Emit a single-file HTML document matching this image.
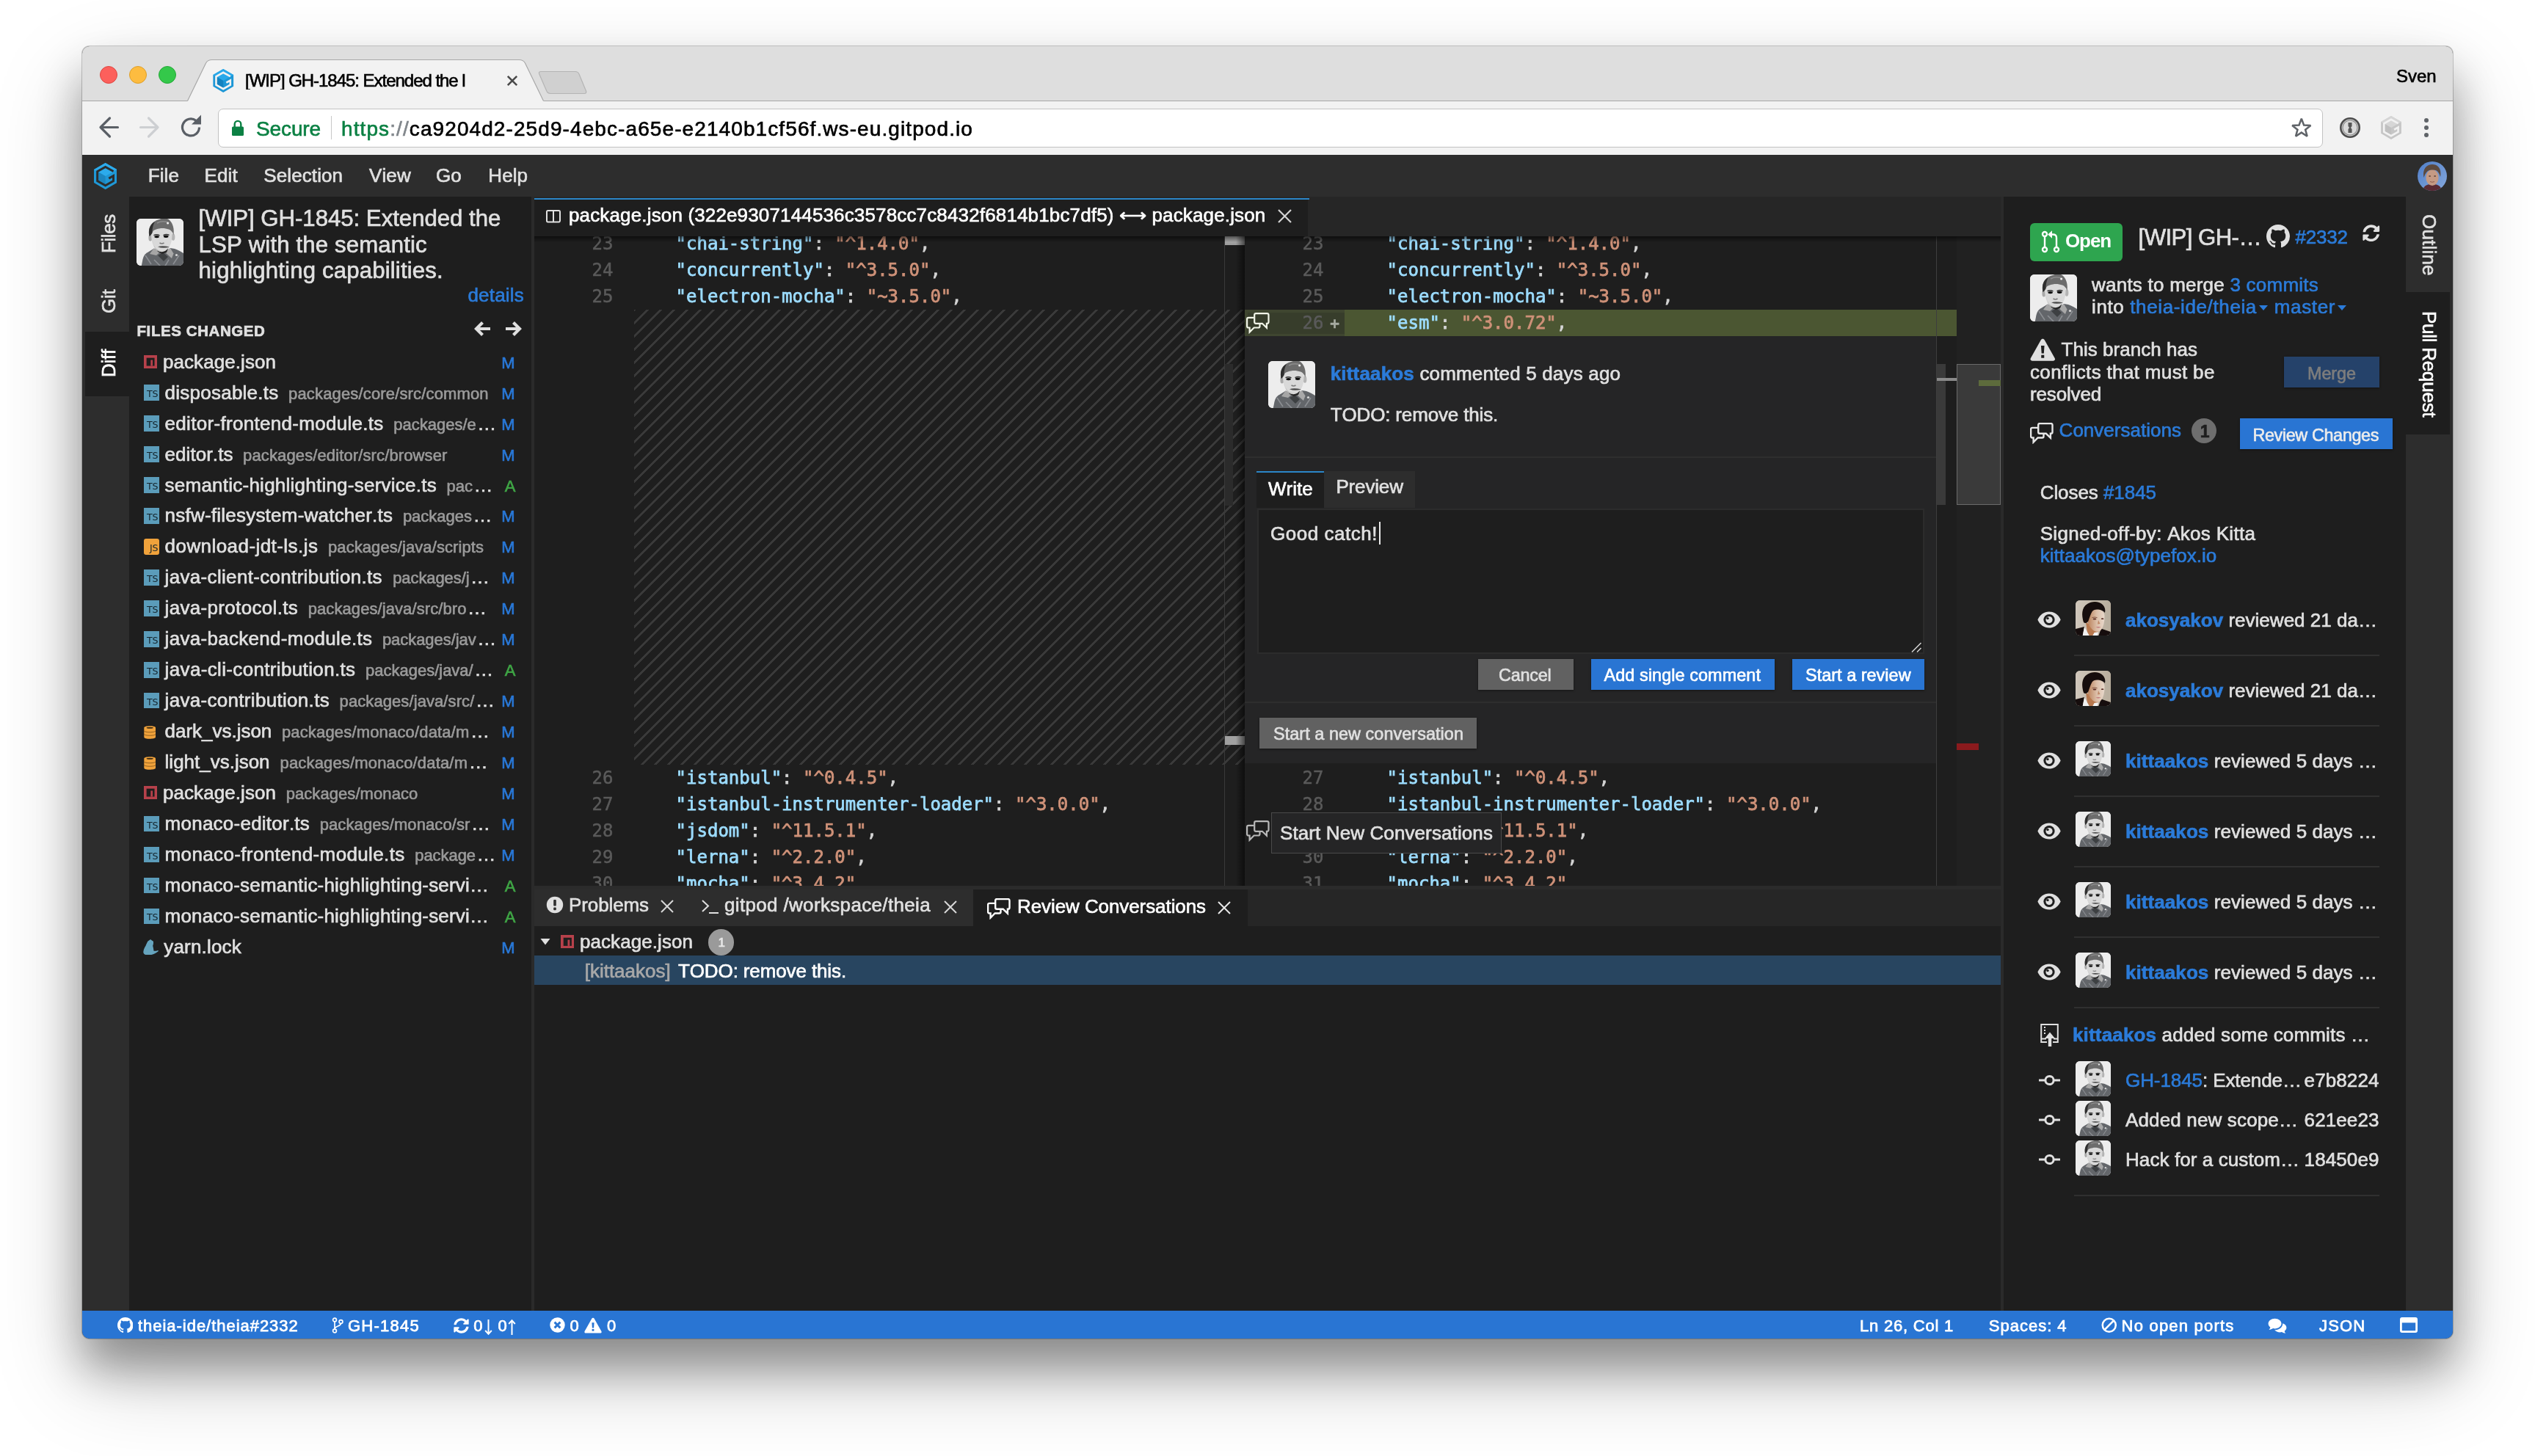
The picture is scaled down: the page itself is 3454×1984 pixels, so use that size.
<!DOCTYPE html>
<html lang="en">
<head>
<meta charset="utf-8">
<title>[WIP] GH-1845: Extended the LSP with the semantic highlighting capabilities.</title>
<style>
*{box-sizing:border-box;margin:0;padding:0}
html,body{width:3454px;height:1984px;background:#fff;overflow:hidden}
body{font-family:"Liberation Sans",Arial,Helvetica,sans-serif;font-size:26px;color:#e0e0e0;font-kerning:none;-webkit-text-stroke:0.65px currentColor}
.mono{font-family:"DejaVu Sans Mono","Liberation Mono",monospace}
#win{position:absolute;left:112px;top:63px;width:3230px;height:1761px;border-radius:10px;overflow:hidden;background:#1e1e1e;z-index:2}
#shadow{position:absolute;left:112px;top:63px;width:3230px;height:1761px;border-radius:10px;box-shadow:0 0 0 1px rgba(0,0,0,.2),0 40px 60px rgba(0,0,0,.33),0 50px 120px rgba(0,0,0,.22);z-index:1}
#p{position:absolute;left:-112px;top:-63px;width:3454px;height:1984px;will-change:transform}
#p div,#p span.t,#p svg{position:absolute}
.t{white-space:nowrap;line-height:1;display:block}
.lnk{color:#2b7bd9}
.dim{color:#9e9e9e}
</style>
</head>
<body>
<div id="shadow"></div>
<div id="win"><div id="p">
<div style="left:112px;top:63px;width:3230px;height:75px;background:#dedede;border-bottom:1px solid #a8a8a8"></div>
<div style="left:112px;top:138px;width:3230px;height:74px;background:#f2f2f2;"></div>
<div style="left:112px;top:211px;width:3230px;height:57px;background:#2d2d2d;"></div>
<div style="left:112px;top:268px;width:64px;height:1518px;background:#2d2d2d;"></div>
<div style="left:3278px;top:268px;width:64px;height:1518px;background:#2d2d2d;"></div>
<div style="left:176px;top:268px;width:548px;height:1518px;background:#1e1e1e;"></div>
<div style="left:724px;top:268px;width:4px;height:1518px;background:#2a2a2a;"></div>
<div style="left:728px;top:268px;width:1998px;height:1518px;background:#1e1e1e;"></div>
<div style="left:2726px;top:268px;width:4px;height:1518px;background:#2a2a2a;"></div>
<div style="left:2730px;top:268px;width:548px;height:1518px;background:#1e1e1e;"></div>
<div style="left:112px;top:1786px;width:3230px;height:38px;background:#2975d3;"></div>
<div style="left:136px;top:90px;width:24px;height:24px;background:#fc605c;border-radius:50%;border:1px solid #de4640"></div>
<div style="left:176px;top:90px;width:24px;height:24px;background:#fdbc40;border-radius:50%;border:1px solid #dd9f2a"></div>
<div style="left:216px;top:90px;width:24px;height:24px;background:#34c84a;border-radius:50%;border:1px solid #24a938"></div>
<svg style="left:240px;top:78px;" width="520" height="62" viewBox="240 78 520 62"><path d="M255.5 137.5 L280.5 86 Q283 81.5 288.5 81.5 L707.5 81.5 Q713 81.5 715.5 86 L740.5 137.5 L741 139 L255 139 Z" fill="#f2f2f2"/><path d="M255.5 137.5 L280.5 86 Q283 81.5 288.5 81.5 L707.5 81.5 Q713 81.5 715.5 86 L740.5 137.5" fill="none" stroke="#a8a8a8" stroke-width="1.2"/></svg>
<svg style="left:730px;top:94px;" width="74" height="38" viewBox="730 94 74 38"><path d="M737 97.5 L784 97.5 Q787.5 97.5 789 101 L798.5 124 Q799.5 127.5 796 127.5 L750 127.5 Q746.5 127.5 745 124.5 L734.8 101 Q733.5 97.5 737 97.5 Z" fill="#d0d0d0" stroke="#b4b4b4" stroke-width="1.2"/></svg>
<svg style="left:290px;top:94px;" width="28.5" height="32" viewBox="230 200 915 1055"><polygon points="685,200 1145,465 1145,985 685,1255 230,985 230,465" fill="#1d97d6"/><polygon points="685,200 1145,465 685,725 230,465" fill="#2aa9ea"/><polygon points="410,565 685,725 685,1050 410,895" fill="#1482bf"/><path d="M1005 537 L685 358 L365 540 L365 915 L685 1098 L1003 915 L1003 712 L822 816" fill="none" stroke="#f2f2f2" stroke-width="86" stroke-linejoin="miter"/></svg>
<span id="t1" class="t" style="top:98.0px;font-size:24px;left:334.0px;color:#000;letter-spacing:-1.030px;width:349px;overflow:hidden;-webkit-mask-image:linear-gradient(90deg,#000 298px,transparent 347px);mask-image:linear-gradient(90deg,#000 298px,transparent 347px);">[WIP] GH-1845: Extended the l</span>
<svg style="left:689px;top:101px;" width="18" height="18" viewBox="0 0 18 18"><path d="M2.8 2.8 L15.2 15.2 M15.2 2.8 L2.8 15.2" stroke="#4a4a4a" stroke-width="2.6" fill="none"/></svg>
<span id="t2" class="t" style="top:92.0px;font-size:24px;right:134.5px;color:#000;letter-spacing:-0.051px;">Sven</span>
<svg style="left:130px;top:156px;" width="36" height="36" viewBox="130 156 36 36"><path d="M160.5 173.5 L137 173.5 M149.5 161 L137 173.5 L149.5 186" stroke="#5a5f66" stroke-width="3.2" fill="none" stroke-linecap="round" stroke-linejoin="round"/></svg>
<svg style="left:186px;top:156px;" width="36" height="36" viewBox="186 156 36 36"><path d="M191.5 173.5 L215 173.5 M202.5 161 L215 173.5 L202.5 186" stroke="#cdcfd2" stroke-width="3.2" fill="none" stroke-linecap="round" stroke-linejoin="round"/></svg>
<svg style="left:242px;top:154px;" width="40" height="40" viewBox="242 154 40 40"><path d="M271.5 173.5 A11.5 11.5 0 1 1 267 164.3" stroke="#5a5f66" stroke-width="3.2" fill="none"/><path d="M261 169.5 L274 169.5 L274 156.5 Z" fill="#5a5f66"/></svg>
<div style="left:297px;top:148px;width:2868px;height:53px;background:#fff;border:1px solid #c2c2c2;border-radius:7px"></div>
<svg style="left:314px;top:162px;" width="20" height="26" viewBox="314 162 20 26"><rect x="316" y="172.5" width="16" height="12.5" rx="1.5" fill="#0b8043"/><path d="M319.7 173 V169.2 A4.3 4.3 0 0 1 328.3 169.2 V173" fill="none" stroke="#0b8043" stroke-width="2.4"/></svg>
<span id="t3" class="t" style="top:162.0px;font-size:28px;left:349.0px;color:#0b8043;letter-spacing:-0.120px;">Secure</span>
<div style="left:451px;top:158px;width:1px;height:32px;background:#c8c8c8;"></div>
<span id="t4" class="t" style="top:162.0px;font-size:28px;left:465.0px;color:#000;letter-spacing:1.092px;"><span style="color:#0b8043">https</span><span style="color:#80868b">://</span>ca9204d2-25d9-4ebc-a65e-e2140b1cf56f.ws-eu.gitpod.io</span>
<svg style="left:3118px;top:157px;" width="36" height="34" viewBox="3118 157 36 34"><path d="M3135.8 161.8 L3139.1 170.5 L3148.4 170.9 L3141.1 176.7 L3143.6 185.7 L3135.8 180.6 L3128.0 185.7 L3130.5 176.7 L3123.2 170.9 L3132.5 170.5 Z" fill="none" stroke="#5f6368" stroke-width="2.5" stroke-linejoin="miter" stroke-miterlimit="2.2"/></svg>
<svg style="left:3186px;top:158px;" width="32" height="32" viewBox="3186 158 32 32"><circle cx="3202" cy="174" r="12.7" fill="#d9d9d9" stroke="#4d4d4d" stroke-width="2.6"/><circle cx="3202" cy="174" r="10" fill="none" stroke="#8c8c8c" stroke-width="1.2"/><path d="M3199.5 167 H3204.5 V172 L3203 174 L3204.5 176 V181 H3199.5 V176 L3201 174 L3199.5 172 Z" fill="#555"/></svg>
<svg style="left:3244px;top:158px;" width="28" height="32" viewBox="230 200 915 1055"><polygon points="685,200 1145,465 1145,985 685,1255 230,985 230,465" fill="#c6c6c6"/><polygon points="685,200 1145,465 685,725 230,465" fill="#d6d6d6"/><polygon points="410,565 685,725 685,1050 410,895" fill="#c0c0c0"/><path d="M1005 537 L685 358 L365 540 L365 915 L685 1098 L1003 915 L1003 712 L822 816" fill="none" stroke="#f2f2f2" stroke-width="86" stroke-linejoin="miter"/></svg>
<div style="left:3303px;top:160.7px;width:6px;height:6px;background:#5f6368;border-radius:50%"></div>
<div style="left:3303px;top:171px;width:6px;height:6px;background:#5f6368;border-radius:50%"></div>
<div style="left:3303px;top:181.2px;width:6px;height:6px;background:#5f6368;border-radius:50%"></div>
<svg style="left:128px;top:222px;" width="31.4" height="36.2" viewBox="230 200 915 1055"><polygon points="685,200 1145,465 1145,985 685,1255 230,985 230,465" fill="#1f98d6"/><polygon points="685,200 1145,465 685,725 230,465" fill="#2cabec"/><polygon points="410,565 685,725 685,1050 410,895" fill="#1c86c0"/><path d="M1005 537 L685 358 L365 540 L365 915 L685 1098 L1003 915 L1003 712 L822 816" fill="none" stroke="#2d2d2d" stroke-width="86" stroke-linejoin="miter"/></svg>
<span id="t5" class="t" style="top:226.0px;font-size:26px;left:201.7px;color:#e0e0e0;letter-spacing:0.1px;">File</span>
<span id="t6" class="t" style="top:226.0px;font-size:26px;left:278.6px;color:#e0e0e0;letter-spacing:0.1px;">Edit</span>
<span id="t7" class="t" style="top:226.0px;font-size:26px;left:359.3px;color:#e0e0e0;letter-spacing:0.1px;">Selection</span>
<span id="t8" class="t" style="top:226.0px;font-size:26px;left:503.0px;color:#e0e0e0;letter-spacing:0.1px;">View</span>
<span id="t9" class="t" style="top:226.0px;font-size:26px;left:594.0px;color:#e0e0e0;letter-spacing:0.1px;">Go</span>
<span id="t10" class="t" style="top:226.0px;font-size:26px;left:665.3px;color:#e0e0e0;letter-spacing:0.1px;">Help</span>
<div style="left:116px;top:452px;width:60px;height:88px;background:#1e1e1e;"></div>
<span class="t" style="position:absolute;left:134.5px;top:344.5px;font-size:26px;color:#e0e0e0;letter-spacing:-0.4px;transform-origin:0 0;transform:rotate(-90deg);">Files</span>
<span class="t" style="position:absolute;left:134.5px;top:427.0px;font-size:26px;color:#e0e0e0;letter-spacing:-0.3px;transform-origin:0 0;transform:rotate(-90deg);">Git</span>
<span class="t" style="position:absolute;left:134.5px;top:514.0px;font-size:26px;color:#fff;letter-spacing:-0.3px;transform-origin:0 0;transform:rotate(-90deg);">Diff</span>
<svg style="left:186px;top:298px;" width="64" height="64" viewBox="0 0 64 64"><defs><clipPath id="c10"><rect x="0" y="0" width="64" height="64" rx="6.0"/></clipPath><filter id="f10" x="-10%" y="-10%" width="120%" height="120%"><feGaussianBlur stdDeviation="0.5"/></filter></defs><g clip-path="url(#c10)"><rect width="64" height="64" fill="#ededed"/><g filter="url(#f10)"><rect x="-4" y="-4" width="72" height="72" fill="#ededed"/><path d="M6 68 L8 58 C9 52 11 48 15 46 L24 40.5 L36 47 L46 40 L52 41 C58 43 63 46 68 50 L68 68 Z" fill="#63666b"/><path d="M12 50 L20 62 M58 50 L50 62 M24 56 L34 66 M44 56 L38 66" stroke="#8b8e92" stroke-width="1.6" fill="none"/><path d="M23.5 40.5 L18 48 L27 50 L33 44.5 Z" fill="#a6a6a6"/><path d="M46 40 L50.5 47.5 L48 54 L38 45 Z" fill="#a9a9a9"/><path d="M29 50 L36 46 L43 52 L37 58 Z" fill="#3d3f43"/><path d="M26 38 L44 38 L41 46 L35 48 L29 45 Z" fill="#262626"/><ellipse cx="18.8" cy="26" rx="2.4" ry="4.6" fill="#a8a8a8"/><ellipse cx="50" cy="25" rx="2.4" ry="4.8" fill="#b4b4b4"/><path d="M20 20 C20 12 26 10 34 10 C43 10 48.5 13 48.5 21 C48.5 32 46 38 41 42.5 C37 46 31 46 27.5 42.5 C22 38 20 30 20 20Z" fill="#d9d9d9"/><path d="M22 30 C23 38 27 43 34 44.5 C30 45.5 26 42 24 38Z" fill="#b5b5b5"/><path d="M17.5 24 C15 12 20 4 31 1 C36 -1 42 -1 45 2 C50 7 51.5 14 50.5 22 C49 18 47 15.5 44 14.5 C40 13.5 36 12.5 31 13.5 C26 14.5 23 15 21.5 19 C20.5 21 19 23 17.5 24Z" fill="#6c6c6c"/><path d="M17.5 24 C15.5 14 19 7 25 4 C22 9 21.5 15 21.5 19 C20.5 21 19 23 17.5 24Z" fill="#2e2e2e"/><path d="M28 6 C33 3 40 3 44 6" stroke="#8c8c8c" stroke-width="1.6" fill="none"/><circle cx="42.6" cy="6" r="1.5" fill="#f4f4f4"/><ellipse cx="27.6" cy="24.6" rx="3.3" ry="1.7" fill="#0c0c0c"/><ellipse cx="40.2" cy="24.2" rx="3.3" ry="1.7" fill="#0c0c0c"/><path d="M23.5 22.6 Q27.5 20.8 31.5 22.8 M36.5 22.6 Q40.5 20.6 44.5 22.4" stroke="#333" stroke-width="1.4" fill="none"/><path d="M31.5 33 Q34.5 34.8 37.5 33" stroke="#7d7d7d" stroke-width="1.5" fill="none"/><path d="M29 38.2 Q35 36.4 45 38.4 Q36 41.2 29 38.2Z" fill="#4a4a4a"/><circle cx="54.5" cy="49.5" r="1.6" fill="#d8d8d8"/></g></g></svg>
<span id="t12" class="t" style="top:282.0px;font-size:31.2px;left:270.6px;color:#e0e0e0;letter-spacing:-0.033px;">[WIP] GH-1845: Extended the</span>
<span id="t13" class="t" style="top:318.0px;font-size:31.2px;left:270.6px;color:#e0e0e0;letter-spacing:0.126px;">LSP with the semantic</span>
<span id="t14" class="t" style="top:353.0px;font-size:31.2px;left:270.6px;color:#e0e0e0;letter-spacing:0.149px;">highlighting capabilities.</span>
<span id="t15" class="t" style="top:389.0px;font-size:26px;right:2740.0px;color:#2b7bd9;letter-spacing:0.2px;">details</span>
<span id="t16" class="t" style="top:441.0px;font-size:20.5px;left:186.5px;color:#e0e0e0;font-weight:bold;letter-spacing:0.582px;">FILES CHANGED</span>
<svg style="left:645px;top:436px;" width="26" height="24" viewBox="0 0 26 24"><path d="M23 12 H5 M12.5 3.5 L4 12 L12.5 20.5" stroke="#e0e0e0" stroke-width="4.2" fill="none" stroke-linejoin="miter"/></svg>
<svg style="left:686px;top:436px;" width="26" height="24" viewBox="0 0 26 24"><path d="M3 12 H21 M13.5 3.5 L22 12 L13.5 20.5" stroke="#e0e0e0" stroke-width="4.2" fill="none" stroke-linejoin="miter"/></svg>
<svg style="left:195.7px;top:483.7px;" width="18.2" height="18.2" viewBox="0 0 18 18"><rect width="18" height="18" fill="#b7414b"/><rect x="3.6" y="3.6" width="10.8" height="10.8" fill="#1e1e1e"/><rect x="9.2" y="6.4" width="2.7" height="8" fill="#b7414b"/></svg>
<span id="t17" class="t" style="top:480.0px;font-size:26px;left:221.9px;color:#e0e0e0;letter-spacing:0.079px;">package.json</span>
<span id="t18" class="t" style="top:484.0px;font-size:22px;right:2752.5px;color:#2979d9;">M</span>
<div style="left:195.7px;top:524.4499999999999px;width:21.5px;height:21.5px;background:#5b9cba;border-radius:0px"><span class="t" style="position:absolute;left:0;width:100%;text-align:right;padding-right:2px;top:6.9px;font-size:12.6px;letter-spacing:-0.2px;-webkit-text-stroke:0;color:#14242c;font-family:'DejaVu Sans','Liberation Sans',sans-serif">TS</span></div>
<span id="t19" class="t" style="top:522.0px;font-size:26px;left:224.6px;color:#e0e0e0;letter-spacing:0.239px;">disposable.ts</span>
<span id="t20" class="t" style="top:526.0px;font-size:22px;left:393.1px;color:#9a9a9a;letter-spacing:0.153px;">packages/core/src/common</span>
<span id="t21" class="t" style="top:526.0px;font-size:22px;right:2752.5px;color:#2979d9;">M</span>
<div style="left:195.7px;top:566.4px;width:21.5px;height:21.5px;background:#5b9cba;border-radius:0px"><span class="t" style="position:absolute;left:0;width:100%;text-align:right;padding-right:2px;top:6.9px;font-size:12.6px;letter-spacing:-0.2px;-webkit-text-stroke:0;color:#14242c;font-family:'DejaVu Sans','Liberation Sans',sans-serif">TS</span></div>
<span id="t22" class="t" style="top:564.0px;font-size:26px;left:224.6px;color:#e0e0e0;letter-spacing:0.302px;">editor-frontend-module.ts</span>
<span id="t23" class="t" style="top:568.0px;font-size:22px;left:536.3px;color:#9a9a9a;letter-spacing:-0.002px;">packages/e</span>
<span id="t24" class="t" style="top:564.0px;font-size:26px;right:2777.7px;color:#e0e0e0;">…</span>
<span id="t25" class="t" style="top:568.0px;font-size:22px;right:2752.5px;color:#2979d9;">M</span>
<div style="left:195.7px;top:608.3499999999999px;width:21.5px;height:21.5px;background:#5b9cba;border-radius:0px"><span class="t" style="position:absolute;left:0;width:100%;text-align:right;padding-right:2px;top:6.9px;font-size:12.6px;letter-spacing:-0.2px;-webkit-text-stroke:0;color:#14242c;font-family:'DejaVu Sans','Liberation Sans',sans-serif">TS</span></div>
<span id="t26" class="t" style="top:606.0px;font-size:26px;left:224.6px;color:#e0e0e0;letter-spacing:0.040px;">editor.ts</span>
<span id="t27" class="t" style="top:610.0px;font-size:22px;left:331.1px;color:#9a9a9a;letter-spacing:0.123px;">packages/editor/src/browser</span>
<span id="t28" class="t" style="top:610.0px;font-size:22px;right:2752.5px;color:#2979d9;">M</span>
<div style="left:195.7px;top:650.3px;width:21.5px;height:21.5px;background:#5b9cba;border-radius:0px"><span class="t" style="position:absolute;left:0;width:100%;text-align:right;padding-right:2px;top:6.9px;font-size:12.6px;letter-spacing:-0.2px;-webkit-text-stroke:0;color:#14242c;font-family:'DejaVu Sans','Liberation Sans',sans-serif">TS</span></div>
<span id="t29" class="t" style="top:648.0px;font-size:26px;left:224.6px;color:#e0e0e0;letter-spacing:0.237px;">semantic-highlighting-service.ts</span>
<span id="t30" class="t" style="top:652.0px;font-size:22px;left:608.5px;color:#9a9a9a;letter-spacing:0.004px;">pac</span>
<span id="t31" class="t" style="top:648.0px;font-size:26px;right:2782.5px;color:#e0e0e0;">…</span>
<span id="t32" class="t" style="top:652.0px;font-size:22px;right:2751.5px;color:#3fa545;">A</span>
<div style="left:195.7px;top:692.25px;width:21.5px;height:21.5px;background:#5b9cba;border-radius:0px"><span class="t" style="position:absolute;left:0;width:100%;text-align:right;padding-right:2px;top:6.9px;font-size:12.6px;letter-spacing:-0.2px;-webkit-text-stroke:0;color:#14242c;font-family:'DejaVu Sans','Liberation Sans',sans-serif">TS</span></div>
<span id="t33" class="t" style="top:689.0px;font-size:26px;left:224.6px;color:#e0e0e0;letter-spacing:0.223px;">nsfw-filesystem-watcher.ts</span>
<span id="t34" class="t" style="top:693.0px;font-size:22px;left:548.9px;color:#9a9a9a;letter-spacing:-0.010px;">packages</span>
<span id="t35" class="t" style="top:689.0px;font-size:26px;right:2783.5px;color:#e0e0e0;">…</span>
<span id="t36" class="t" style="top:693.0px;font-size:22px;right:2752.5px;color:#2979d9;">M</span>
<div style="left:195.7px;top:734.1999999999999px;width:21.5px;height:21.5px;background:#f0a23b;border-radius:3px"><span class="t" style="position:absolute;left:0;width:100%;text-align:right;padding-right:2px;top:6.9px;font-size:12.6px;letter-spacing:-0.2px;-webkit-text-stroke:0;color:#14242c;font-family:'DejaVu Sans','Liberation Sans',sans-serif">JS</span></div>
<span id="t37" class="t" style="top:731.0px;font-size:26px;left:224.6px;color:#e0e0e0;letter-spacing:0.437px;">download-jdt-ls.js</span>
<span id="t38" class="t" style="top:735.0px;font-size:22px;left:447.0px;color:#9a9a9a;letter-spacing:0.080px;">packages/java/scripts</span>
<span id="t39" class="t" style="top:735.0px;font-size:22px;right:2752.5px;color:#2979d9;">M</span>
<div style="left:195.7px;top:776.15px;width:21.5px;height:21.5px;background:#5b9cba;border-radius:0px"><span class="t" style="position:absolute;left:0;width:100%;text-align:right;padding-right:2px;top:6.9px;font-size:12.6px;letter-spacing:-0.2px;-webkit-text-stroke:0;color:#14242c;font-family:'DejaVu Sans','Liberation Sans',sans-serif">TS</span></div>
<span id="t40" class="t" style="top:773.0px;font-size:26px;left:224.6px;color:#e0e0e0;letter-spacing:0.324px;">java-client-contribution.ts</span>
<span id="t41" class="t" style="top:777.0px;font-size:22px;left:535.2px;color:#9a9a9a;letter-spacing:-0.084px;">packages/j</span>
<span id="t42" class="t" style="top:773.0px;font-size:26px;right:2786.9px;color:#e0e0e0;">…</span>
<span id="t43" class="t" style="top:777.0px;font-size:22px;right:2752.5px;color:#2979d9;">M</span>
<div style="left:195.7px;top:818.0999999999999px;width:21.5px;height:21.5px;background:#5b9cba;border-radius:0px"><span class="t" style="position:absolute;left:0;width:100%;text-align:right;padding-right:2px;top:6.9px;font-size:12.6px;letter-spacing:-0.2px;-webkit-text-stroke:0;color:#14242c;font-family:'DejaVu Sans','Liberation Sans',sans-serif">TS</span></div>
<span id="t44" class="t" style="top:815.0px;font-size:26px;left:224.6px;color:#e0e0e0;letter-spacing:0.323px;">java-protocol.ts</span>
<span id="t45" class="t" style="top:819.0px;font-size:22px;left:419.7px;color:#9a9a9a;letter-spacing:0.085px;">packages/java/src/bro</span>
<span id="t46" class="t" style="top:815.0px;font-size:26px;right:2791.0px;color:#e0e0e0;">…</span>
<span id="t47" class="t" style="top:819.0px;font-size:22px;right:2752.5px;color:#2979d9;">M</span>
<div style="left:195.7px;top:860.05px;width:21.5px;height:21.5px;background:#5b9cba;border-radius:0px"><span class="t" style="position:absolute;left:0;width:100%;text-align:right;padding-right:2px;top:6.9px;font-size:12.6px;letter-spacing:-0.2px;-webkit-text-stroke:0;color:#14242c;font-family:'DejaVu Sans','Liberation Sans',sans-serif">TS</span></div>
<span id="t48" class="t" style="top:857.0px;font-size:26px;left:224.6px;color:#e0e0e0;letter-spacing:0.302px;">java-backend-module.ts</span>
<span id="t49" class="t" style="top:861.0px;font-size:22px;left:520.9px;color:#9a9a9a;letter-spacing:-0.047px;">packages/jav</span>
<span id="t50" class="t" style="top:857.0px;font-size:26px;right:2777.7px;color:#e0e0e0;">…</span>
<span id="t51" class="t" style="top:861.0px;font-size:22px;right:2752.5px;color:#2979d9;">M</span>
<div style="left:195.7px;top:902.0px;width:21.5px;height:21.5px;background:#5b9cba;border-radius:0px"><span class="t" style="position:absolute;left:0;width:100%;text-align:right;padding-right:2px;top:6.9px;font-size:12.6px;letter-spacing:-0.2px;-webkit-text-stroke:0;color:#14242c;font-family:'DejaVu Sans','Liberation Sans',sans-serif">TS</span></div>
<span id="t52" class="t" style="top:899.0px;font-size:26px;left:224.6px;color:#e0e0e0;letter-spacing:0.351px;">java-cli-contribution.ts</span>
<span id="t53" class="t" style="top:903.0px;font-size:22px;left:498.1px;color:#9a9a9a;letter-spacing:-0.012px;">packages/java/</span>
<span id="t54" class="t" style="top:899.0px;font-size:26px;right:2781.8px;color:#e0e0e0;">…</span>
<span id="t55" class="t" style="top:903.0px;font-size:22px;right:2751.5px;color:#3fa545;">A</span>
<div style="left:195.7px;top:943.95px;width:21.5px;height:21.5px;background:#5b9cba;border-radius:0px"><span class="t" style="position:absolute;left:0;width:100%;text-align:right;padding-right:2px;top:6.9px;font-size:12.6px;letter-spacing:-0.2px;-webkit-text-stroke:0;color:#14242c;font-family:'DejaVu Sans','Liberation Sans',sans-serif">TS</span></div>
<span id="t56" class="t" style="top:941.0px;font-size:26px;left:224.6px;color:#e0e0e0;letter-spacing:0.309px;">java-contribution.ts</span>
<span id="t57" class="t" style="top:945.0px;font-size:22px;left:462.6px;color:#9a9a9a;letter-spacing:0.086px;">packages/java/src/</span>
<span id="t58" class="t" style="top:941.0px;font-size:26px;right:2780.1px;color:#e0e0e0;">…</span>
<span id="t59" class="t" style="top:945.0px;font-size:22px;right:2752.5px;color:#2979d9;">M</span>
<svg style="left:195.9px;top:987.9px;" width="16.4" height="20" viewBox="0 0 16.4 20"><path d="M.3 3.6 C.3 .5 16.1 .5 16.1 3.6 V16.4 C16.1 19.5 .3 19.5 .3 16.4Z" fill="#f0a23b"/><ellipse cx="8.2" cy="3.7" rx="4.6" ry="1.05" fill="#3b2a12"/><path d="M.3 7.8 C.3 10.4 16.1 10.4 16.1 7.8 M.3 12.3 C.3 14.9 16.1 14.9 16.1 12.3" fill="none" stroke="#8a5a1c" stroke-width=".9"/></svg>
<span id="t60" class="t" style="top:983.0px;font-size:26px;left:224.6px;color:#e0e0e0;letter-spacing:-0.023px;">dark_vs.json</span>
<span id="t61" class="t" style="top:987.0px;font-size:22px;left:383.9px;color:#9a9a9a;letter-spacing:0.169px;">packages/monaco/data/m</span>
<span id="t62" class="t" style="top:983.0px;font-size:26px;right:2786.9px;color:#e0e0e0;">…</span>
<span id="t63" class="t" style="top:987.0px;font-size:22px;right:2752.5px;color:#2979d9;">M</span>
<svg style="left:195.9px;top:1029.85px;" width="16.4" height="20" viewBox="0 0 16.4 20"><path d="M.3 3.6 C.3 .5 16.1 .5 16.1 3.6 V16.4 C16.1 19.5 .3 19.5 .3 16.4Z" fill="#f0a23b"/><ellipse cx="8.2" cy="3.7" rx="4.6" ry="1.05" fill="#3b2a12"/><path d="M.3 7.8 C.3 10.4 16.1 10.4 16.1 7.8 M.3 12.3 C.3 14.9 16.1 14.9 16.1 12.3" fill="none" stroke="#8a5a1c" stroke-width=".9"/></svg>
<span id="t64" class="t" style="top:1025.0px;font-size:26px;left:224.6px;color:#e0e0e0;letter-spacing:-0.010px;">light_vs.json</span>
<span id="t65" class="t" style="top:1029.0px;font-size:22px;left:381.5px;color:#9a9a9a;letter-spacing:0.169px;">packages/monaco/data/m</span>
<span id="t66" class="t" style="top:1025.0px;font-size:26px;right:2789.3px;color:#e0e0e0;">…</span>
<span id="t67" class="t" style="top:1029.0px;font-size:22px;right:2752.5px;color:#2979d9;">M</span>
<svg style="left:195.7px;top:1071.0px;" width="18.2" height="18.2" viewBox="0 0 18 18"><rect width="18" height="18" fill="#b7414b"/><rect x="3.6" y="3.6" width="10.8" height="10.8" fill="#1e1e1e"/><rect x="9.2" y="6.4" width="2.7" height="8" fill="#b7414b"/></svg>
<span id="t68" class="t" style="top:1067.0px;font-size:26px;left:221.9px;color:#e0e0e0;letter-spacing:0.079px;">package.json</span>
<span id="t69" class="t" style="top:1071.0px;font-size:22px;left:389.7px;color:#9a9a9a;letter-spacing:0.071px;">packages/monaco</span>
<span id="t70" class="t" style="top:1071.0px;font-size:22px;right:2752.5px;color:#2979d9;">M</span>
<div style="left:195.7px;top:1111.75px;width:21.5px;height:21.5px;background:#5b9cba;border-radius:0px"><span class="t" style="position:absolute;left:0;width:100%;text-align:right;padding-right:2px;top:6.9px;font-size:12.6px;letter-spacing:-0.2px;-webkit-text-stroke:0;color:#14242c;font-family:'DejaVu Sans','Liberation Sans',sans-serif">TS</span></div>
<span id="t71" class="t" style="top:1109.0px;font-size:26px;left:224.6px;color:#e0e0e0;letter-spacing:0.240px;">monaco-editor.ts</span>
<span id="t72" class="t" style="top:1113.0px;font-size:22px;left:435.7px;color:#9a9a9a;letter-spacing:0.104px;">packages/monaco/sr</span>
<span id="t73" class="t" style="top:1109.0px;font-size:26px;right:2785.9px;color:#e0e0e0;">…</span>
<span id="t74" class="t" style="top:1113.0px;font-size:22px;right:2752.5px;color:#2979d9;">M</span>
<div style="left:195.7px;top:1153.7px;width:21.5px;height:21.5px;background:#5b9cba;border-radius:0px"><span class="t" style="position:absolute;left:0;width:100%;text-align:right;padding-right:2px;top:6.9px;font-size:12.6px;letter-spacing:-0.2px;-webkit-text-stroke:0;color:#14242c;font-family:'DejaVu Sans','Liberation Sans',sans-serif">TS</span></div>
<span id="t75" class="t" style="top:1151.0px;font-size:26px;left:224.6px;color:#e0e0e0;letter-spacing:0.362px;">monaco-frontend-module.ts</span>
<span id="t76" class="t" style="top:1155.0px;font-size:22px;left:565.2px;color:#9a9a9a;letter-spacing:-0.047px;">package</span>
<span id="t77" class="t" style="top:1151.0px;font-size:26px;right:2778.4px;color:#e0e0e0;">…</span>
<span id="t78" class="t" style="top:1155.0px;font-size:22px;right:2752.5px;color:#2979d9;">M</span>
<div style="left:195.7px;top:1195.65px;width:21.5px;height:21.5px;background:#5b9cba;border-radius:0px"><span class="t" style="position:absolute;left:0;width:100%;text-align:right;padding-right:2px;top:6.9px;font-size:12.6px;letter-spacing:-0.2px;-webkit-text-stroke:0;color:#14242c;font-family:'DejaVu Sans','Liberation Sans',sans-serif">TS</span></div>
<span id="t79" class="t" style="top:1193.0px;font-size:26px;left:224.6px;color:#e0e0e0;letter-spacing:0.189px;">monaco-semantic-highlighting-servi<span style="letter-spacing:1.5px">…</span></span>
<span id="t80" class="t" style="top:1197.0px;font-size:22px;right:2751.5px;color:#3fa545;">A</span>
<div style="left:195.7px;top:1237.6px;width:21.5px;height:21.5px;background:#5b9cba;border-radius:0px"><span class="t" style="position:absolute;left:0;width:100%;text-align:right;padding-right:2px;top:6.9px;font-size:12.6px;letter-spacing:-0.2px;-webkit-text-stroke:0;color:#14242c;font-family:'DejaVu Sans','Liberation Sans',sans-serif">TS</span></div>
<span id="t81" class="t" style="top:1235.0px;font-size:26px;left:224.6px;color:#e0e0e0;letter-spacing:0.189px;">monaco-semantic-highlighting-servi<span style="letter-spacing:1.5px">…</span></span>
<span id="t82" class="t" style="top:1239.0px;font-size:22px;right:2751.5px;color:#3fa545;">A</span>
<svg style="left:195.4px;top:1279.75px;" width="21" height="21.5" viewBox="0 0 21 21.5"><path d="M10.1 0 C11.5 1.5 13.5 2 13.9 3 C14.2 5 14 7 13.2 8.8 C13.8 11 14.3 13.5 14.5 15.8 C16.5 15.9 18.5 15.6 20.3 14.9 C21 15.2 20.9 16 20.4 16.4 C18.5 18 16.5 19.2 14.5 20 C11 21.6 6 21.8 2.5 20.8 C.5 19.5 .1 18 .4 16.5 C.8 13.5 2 11 3.4 9 C4.2 7 5 5 6.5 2.4 C7.8 1.8 9 1 10.1 0Z" fill="#66a4be"/></svg>
<span id="t83" class="t" style="top:1277.0px;font-size:26px;left:223.2px;color:#e0e0e0;letter-spacing:0.198px;">yarn.lock</span>
<span id="t84" class="t" style="top:1281.0px;font-size:22px;right:2752.5px;color:#2979d9;">M</span>
<div style="left:728px;top:268px;width:1998px;height:54px;background:#262626;"></div>
<div style="left:728px;top:270px;width:1056px;height:2px;background:#2b86c8;"></div>
<div style="left:728px;top:272px;width:1054px;height:50px;background:#1e1e1e;"></div>
<svg style="left:744px;top:286px;" width="20" height="18" viewBox="0 0 20 18"><rect x="1" y="1" width="18" height="15.4" rx="1.6" fill="none" stroke="#e0e0e0" stroke-width="2"/><path d="M10 1 V16.4" stroke="#e0e0e0" stroke-width="2"/></svg>
<span id="t85" class="t" style="top:280.0px;font-size:26px;left:775.0px;color:#fff;letter-spacing:0.149px;">package.json (322e9307144536c3578cc7c8432f6814b1bc7df5) ⟷ package.json</span>
<svg style="left:1740.5px;top:284.7px;" width="19" height="19" viewBox="-9.5 -9.5 19 19"><path d="M-8.5 -8.5 L8.5 8.5 M8.5 -8.5 L-8.5 8.5" stroke="#d4d4d4" stroke-width="2.2" fill="none"/></svg>
<div style="left:728px;top:322px;width:1998px;height:885px;overflow:hidden;background:#1e1e1e"><div style="left:-728px;top:-322px;width:3454px;height:1984px">
<span id="t86" class="t mono" style="top:320.0px;font-size:24px;right:2618.5px;color:#5a5a5a;-webkit-text-stroke:0.5px;">23</span>
<span id="t87" class="t mono" style="top:320.0px;font-size:24px;left:920.6px;color:#d4d4d4;-webkit-text-stroke:0.75px;"><span style="color:#9cdcfe">"chai-string"</span><span style="color:#d4d4d4">: </span><span style="color:#ce9178">"^1.4.0"</span><span style="color:#d4d4d4">,</span></span>
<span id="t88" class="t mono" style="top:320.0px;font-size:24px;right:1650.5px;color:#5a5a5a;-webkit-text-stroke:0.5px;">23</span>
<span id="t89" class="t mono" style="top:320.0px;font-size:24px;left:1889.6px;color:#d4d4d4;-webkit-text-stroke:0.75px;"><span style="color:#9cdcfe">"chai-string"</span><span style="color:#d4d4d4">: </span><span style="color:#ce9178">"^1.4.0"</span><span style="color:#d4d4d4">,</span></span>
<span id="t90" class="t mono" style="top:356.0px;font-size:24px;right:2618.5px;color:#5a5a5a;-webkit-text-stroke:0.5px;">24</span>
<span id="t91" class="t mono" style="top:356.0px;font-size:24px;left:920.6px;color:#d4d4d4;-webkit-text-stroke:0.75px;"><span style="color:#9cdcfe">"concurrently"</span><span style="color:#d4d4d4">: </span><span style="color:#ce9178">"^3.5.0"</span><span style="color:#d4d4d4">,</span></span>
<span id="t92" class="t mono" style="top:356.0px;font-size:24px;right:1650.5px;color:#5a5a5a;-webkit-text-stroke:0.5px;">24</span>
<span id="t93" class="t mono" style="top:356.0px;font-size:24px;left:1889.6px;color:#d4d4d4;-webkit-text-stroke:0.75px;"><span style="color:#9cdcfe">"concurrently"</span><span style="color:#d4d4d4">: </span><span style="color:#ce9178">"^3.5.0"</span><span style="color:#d4d4d4">,</span></span>
<span id="t94" class="t mono" style="top:392.0px;font-size:24px;right:2618.5px;color:#5a5a5a;-webkit-text-stroke:0.5px;">25</span>
<span id="t95" class="t mono" style="top:392.0px;font-size:24px;left:920.6px;color:#d4d4d4;-webkit-text-stroke:0.75px;"><span style="color:#9cdcfe">"electron-mocha"</span><span style="color:#d4d4d4">: </span><span style="color:#ce9178">"~3.5.0"</span><span style="color:#d4d4d4">,</span></span>
<span id="t96" class="t mono" style="top:392.0px;font-size:24px;right:1650.5px;color:#5a5a5a;-webkit-text-stroke:0.5px;">25</span>
<span id="t97" class="t mono" style="top:392.0px;font-size:24px;left:1889.6px;color:#d4d4d4;-webkit-text-stroke:0.75px;"><span style="color:#9cdcfe">"electron-mocha"</span><span style="color:#d4d4d4">: </span><span style="color:#ce9178">"~3.5.0"</span><span style="color:#d4d4d4">,</span></span>
<div style="left:864px;top:422px;width:832px;height:620px;background-color:#1e1e1e;background-image:linear-gradient(-45deg,#3a3a3a 11.5%,transparent 11.5%,transparent 50%,#3a3a3a 50%,#3a3a3a 61.5%,transparent 61.5%);background-size:18px 18px;background-position:3px 0px"></div>
<span id="t98" class="t mono" style="top:1048.0px;font-size:24px;right:2618.5px;color:#5a5a5a;-webkit-text-stroke:0.5px;">26</span>
<span id="t99" class="t mono" style="top:1048.0px;font-size:24px;left:920.6px;color:#d4d4d4;-webkit-text-stroke:0.75px;"><span style="color:#9cdcfe">"istanbul"</span><span style="color:#d4d4d4">: </span><span style="color:#ce9178">"^0.4.5"</span><span style="color:#d4d4d4">,</span></span>
<span id="t100" class="t mono" style="top:1048.0px;font-size:24px;right:1650.5px;color:#5a5a5a;-webkit-text-stroke:0.5px;">27</span>
<span id="t101" class="t mono" style="top:1048.0px;font-size:24px;left:1889.6px;color:#d4d4d4;-webkit-text-stroke:0.75px;"><span style="color:#9cdcfe">"istanbul"</span><span style="color:#d4d4d4">: </span><span style="color:#ce9178">"^0.4.5"</span><span style="color:#d4d4d4">,</span></span>
<span id="t102" class="t mono" style="top:1084.0px;font-size:24px;right:2618.5px;color:#5a5a5a;-webkit-text-stroke:0.5px;">27</span>
<span id="t103" class="t mono" style="top:1084.0px;font-size:24px;left:920.6px;color:#d4d4d4;-webkit-text-stroke:0.75px;"><span style="color:#9cdcfe">"istanbul-instrumenter-loader"</span><span style="color:#d4d4d4">: </span><span style="color:#ce9178">"^3.0.0"</span><span style="color:#d4d4d4">,</span></span>
<span id="t104" class="t mono" style="top:1084.0px;font-size:24px;right:1650.5px;color:#5a5a5a;-webkit-text-stroke:0.5px;">28</span>
<span id="t105" class="t mono" style="top:1084.0px;font-size:24px;left:1889.6px;color:#d4d4d4;-webkit-text-stroke:0.75px;"><span style="color:#9cdcfe">"istanbul-instrumenter-loader"</span><span style="color:#d4d4d4">: </span><span style="color:#ce9178">"^3.0.0"</span><span style="color:#d4d4d4">,</span></span>
<span id="t106" class="t mono" style="top:1120.0px;font-size:24px;right:2618.5px;color:#5a5a5a;-webkit-text-stroke:0.5px;">28</span>
<span id="t107" class="t mono" style="top:1120.0px;font-size:24px;left:920.6px;color:#d4d4d4;-webkit-text-stroke:0.75px;"><span style="color:#9cdcfe">"jsdom"</span><span style="color:#d4d4d4">: </span><span style="color:#ce9178">"^11.5.1"</span><span style="color:#d4d4d4">,</span></span>
<span id="t108" class="t mono" style="top:1120.0px;font-size:24px;right:1650.5px;color:#5a5a5a;-webkit-text-stroke:0.5px;">29</span>
<span id="t109" class="t mono" style="top:1120.0px;font-size:24px;left:1889.6px;color:#d4d4d4;-webkit-text-stroke:0.75px;"><span style="color:#9cdcfe">"jsdom"</span><span style="color:#d4d4d4">: </span><span style="color:#ce9178">"^11.5.1"</span><span style="color:#d4d4d4">,</span></span>
<span id="t110" class="t mono" style="top:1156.0px;font-size:24px;right:2618.5px;color:#5a5a5a;-webkit-text-stroke:0.5px;">29</span>
<span id="t111" class="t mono" style="top:1156.0px;font-size:24px;left:920.6px;color:#d4d4d4;-webkit-text-stroke:0.75px;"><span style="color:#9cdcfe">"lerna"</span><span style="color:#d4d4d4">: </span><span style="color:#ce9178">"^2.2.0"</span><span style="color:#d4d4d4">,</span></span>
<span id="t112" class="t mono" style="top:1156.0px;font-size:24px;right:1650.5px;color:#5a5a5a;-webkit-text-stroke:0.5px;">30</span>
<span id="t113" class="t mono" style="top:1156.0px;font-size:24px;left:1889.6px;color:#d4d4d4;-webkit-text-stroke:0.75px;"><span style="color:#9cdcfe">"lerna"</span><span style="color:#d4d4d4">: </span><span style="color:#ce9178">"^2.2.0"</span><span style="color:#d4d4d4">,</span></span>
<span id="t114" class="t mono" style="top:1192.0px;font-size:24px;right:2618.5px;color:#5a5a5a;-webkit-text-stroke:0.5px;">30</span>
<span id="t115" class="t mono" style="top:1192.0px;font-size:24px;left:920.6px;color:#d4d4d4;-webkit-text-stroke:0.75px;"><span style="color:#9cdcfe">"mocha"</span><span style="color:#d4d4d4">: </span><span style="color:#ce9178">"^3.4.2"</span><span style="color:#d4d4d4">,</span></span>
<span id="t116" class="t mono" style="top:1192.0px;font-size:24px;right:1650.5px;color:#5a5a5a;-webkit-text-stroke:0.5px;">31</span>
<span id="t117" class="t mono" style="top:1192.0px;font-size:24px;left:1889.6px;color:#d4d4d4;-webkit-text-stroke:0.75px;"><span style="color:#9cdcfe">"mocha"</span><span style="color:#d4d4d4">: </span><span style="color:#ce9178">"^3.4.2"</span><span style="color:#d4d4d4">,</span></span>
<div style="left:1668px;top:322px;width:1px;height:885px;background:#3a3a3a;"></div>
<div style="left:1669px;top:495.5px;width:10.5px;height:193px;background:#2b2b2b;"></div>
<div style="left:1669px;top:322px;width:27px;height:12px;background:linear-gradient(180deg,#b4b4b4,#9a9a9a)"></div>
<div style="left:1669px;top:1003px;width:27px;height:12px;background:#a0a0a0;"></div>
<div style="left:1684px;top:322px;width:12px;height:885px;background:linear-gradient(90deg,rgba(0,0,0,0),rgba(0,0,0,.55))"></div>
<div style="left:1696px;top:422px;width:136px;height:36px;background:#3f4630;"></div>
<div style="left:1700px;top:425.5px;width:132px;height:29px;background:#373d2b;"></div>
<div style="left:1832px;top:422px;width:834px;height:36px;background:#4b5632;"></div>
<span id="t118" class="t mono" style="top:428.0px;font-size:24px;right:1650.5px;color:#5a5a5a;-webkit-text-stroke:0.5px;">26</span>
<span id="t119" class="t mono" style="top:428.0px;font-size:24px;left:1889.6px;color:#d4d4d4;-webkit-text-stroke:0.75px;"><span style="color:#9cdcfe">"esm"</span><span style="color:#d4d4d4">: </span><span style="color:#ce9178">"^3.0.72"</span><span style="color:#d4d4d4">,</span></span>
<span id="t120" class="t mono" style="top:431.0px;font-size:21px;left:1812.3px;color:#a6aaa0;font-weight:bold;-webkit-text-stroke:0.4px;">+</span>
<svg style="left:1698px;top:426px;" width="32" height="28.5" viewBox="0 0 32 28.5"><g fill="none" stroke="#f2f6e8" stroke-width="2.2" stroke-linejoin="miter"><path d="M10.1 6.9 H3.1 Q1.1 6.9 1.1 8.9 V18.5 Q1.1 20.5 3.1 20.5 H4.6 V26.6 L10.6 20.5 H16.5 Q18.5 20.5 18.5 18.5 V16"/><path d="M13.2 1.1 H28.5 Q30.5 1.1 30.5 3.1 V12.8 Q30.5 14.8 28.5 14.8 H27.9 V20.6 L21.8 14.8 H13.2 Q11.2 14.8 11.2 12.8 V3.1 Q11.2 1.1 13.2 1.1 Z"/></g></svg>
<div style="left:1696px;top:458px;width:941.7px;height:582px;background:#252526;"></div>
<svg style="left:1728px;top:492px;" width="64" height="64" viewBox="0 0 64 64"><defs><clipPath id="c120"><rect x="0" y="0" width="64" height="64" rx="6.0"/></clipPath><filter id="f120" x="-10%" y="-10%" width="120%" height="120%"><feGaussianBlur stdDeviation="0.5"/></filter></defs><g clip-path="url(#c120)"><rect width="64" height="64" fill="#ededed"/><g filter="url(#f120)"><rect x="-4" y="-4" width="72" height="72" fill="#ededed"/><path d="M6 68 L8 58 C9 52 11 48 15 46 L24 40.5 L36 47 L46 40 L52 41 C58 43 63 46 68 50 L68 68 Z" fill="#63666b"/><path d="M12 50 L20 62 M58 50 L50 62 M24 56 L34 66 M44 56 L38 66" stroke="#8b8e92" stroke-width="1.6" fill="none"/><path d="M23.5 40.5 L18 48 L27 50 L33 44.5 Z" fill="#a6a6a6"/><path d="M46 40 L50.5 47.5 L48 54 L38 45 Z" fill="#a9a9a9"/><path d="M29 50 L36 46 L43 52 L37 58 Z" fill="#3d3f43"/><path d="M26 38 L44 38 L41 46 L35 48 L29 45 Z" fill="#262626"/><ellipse cx="18.8" cy="26" rx="2.4" ry="4.6" fill="#a8a8a8"/><ellipse cx="50" cy="25" rx="2.4" ry="4.8" fill="#b4b4b4"/><path d="M20 20 C20 12 26 10 34 10 C43 10 48.5 13 48.5 21 C48.5 32 46 38 41 42.5 C37 46 31 46 27.5 42.5 C22 38 20 30 20 20Z" fill="#d9d9d9"/><path d="M22 30 C23 38 27 43 34 44.5 C30 45.5 26 42 24 38Z" fill="#b5b5b5"/><path d="M17.5 24 C15 12 20 4 31 1 C36 -1 42 -1 45 2 C50 7 51.5 14 50.5 22 C49 18 47 15.5 44 14.5 C40 13.5 36 12.5 31 13.5 C26 14.5 23 15 21.5 19 C20.5 21 19 23 17.5 24Z" fill="#6c6c6c"/><path d="M17.5 24 C15.5 14 19 7 25 4 C22 9 21.5 15 21.5 19 C20.5 21 19 23 17.5 24Z" fill="#2e2e2e"/><path d="M28 6 C33 3 40 3 44 6" stroke="#8c8c8c" stroke-width="1.6" fill="none"/><circle cx="42.6" cy="6" r="1.5" fill="#f4f4f4"/><ellipse cx="27.6" cy="24.6" rx="3.3" ry="1.7" fill="#0c0c0c"/><ellipse cx="40.2" cy="24.2" rx="3.3" ry="1.7" fill="#0c0c0c"/><path d="M23.5 22.6 Q27.5 20.8 31.5 22.8 M36.5 22.6 Q40.5 20.6 44.5 22.4" stroke="#333" stroke-width="1.4" fill="none"/><path d="M31.5 33 Q34.5 34.8 37.5 33" stroke="#7d7d7d" stroke-width="1.5" fill="none"/><path d="M29 38.2 Q35 36.4 45 38.4 Q36 41.2 29 38.2Z" fill="#4a4a4a"/><circle cx="54.5" cy="49.5" r="1.6" fill="#d8d8d8"/></g></g></svg>
<span id="t122" class="t" style="top:496.0px;font-size:26px;left:1812.7px;color:#2b7bd9;letter-spacing:0.175px;"><b>kittaakos</b><span style="color:#e0e0e0"> commented 5 days ago</span></span>
<span id="t123" class="t" style="top:552.0px;font-size:26px;left:1812.7px;color:#e0e0e0;letter-spacing:-0.148px;">TODO: remove this.</span>
<div style="left:1696px;top:622px;width:941.7px;height:2px;background:#2e2e2e;"></div>
<div style="left:1712px;top:642px;width:91.5px;height:50px;background:#1e1e1e;border-top:2px solid #2b86c8"></div>
<div style="left:1803.5px;top:642px;width:124px;height:50px;background:#2d2d2d;"></div>
<span id="t124" class="t" style="top:653.0px;font-size:26px;left:1728.0px;color:#fff;letter-spacing:-0.014px;">Write</span>
<span id="t125" class="t" style="top:650.0px;font-size:26px;left:1820.4px;color:#e0e0e0;letter-spacing:-0.154px;">Preview</span>
<div style="left:1712.5px;top:693px;width:909px;height:198px;background:#1e1e1e;border:2px solid #2c2c2c"></div>
<span id="t126" class="t" style="top:714.0px;font-size:26px;left:1731.0px;color:#e0e0e0;letter-spacing:0.527px;">Good catch!</span>
<div style="left:1879px;top:711px;width:1.6px;height:31px;background:#e8e8e8;"></div>
<svg style="left:2603px;top:874px;" width="16" height="16" viewBox="0 0 16 16"><path d="M14.5 2 L2 14.5 M14.5 9 L9 14.5" stroke="#d0d0d0" stroke-width="1.6"/></svg>
<div style="left:2014px;top:898px;width:130px;height:42px;background:#616161;box-shadow:0 1px 3px rgba(0,0,0,.45);"></div>
<span id="t127" class="t" style="top:909.0px;font-size:23.4px;left:2042.0px;color:#e0e0e0;letter-spacing:-0.202px;">Cancel</span>
<div style="left:2168px;top:898px;width:250px;height:42px;background:#2975d3;box-shadow:0 1px 3px rgba(0,0,0,.45);"></div>
<span id="t128" class="t" style="top:909.0px;font-size:23.4px;left:2185.5px;color:#fff;letter-spacing:0.087px;">Add single comment</span>
<div style="left:2442px;top:898px;width:180px;height:42px;background:#2975d3;box-shadow:0 1px 3px rgba(0,0,0,.45);"></div>
<span id="t129" class="t" style="top:909.0px;font-size:23.4px;left:2460.0px;color:#fff;letter-spacing:0.042px;">Start a review</span>
<div style="left:1696px;top:956px;width:941.7px;height:2px;background:#2e2e2e;"></div>
<div style="left:1716px;top:978px;width:296px;height:42px;background:#616161;box-shadow:0 1px 3px rgba(0,0,0,.45);"></div>
<span id="t130" class="t" style="top:989.0px;font-size:23.4px;left:1735.0px;color:#e0e0e0;letter-spacing:0.065px;">Start a new conversation</span>
<div style="left:2666px;top:322px;width:60px;height:885px;background:#212121;"></div>
<div style="left:2638px;top:322px;width:1px;height:885px;background:#3e3e3e;"></div>
<div style="left:2639px;top:496px;width:11.5px;height:192px;background:#3a3a3a;"></div>
<div style="left:2639px;top:515px;width:27px;height:3.6px;background:#8a8a8a;"></div>
<div style="left:2666px;top:496px;width:60px;height:192px;background:#3a3a3a;border:1px solid #6a6a6a"></div>
<div style="left:2696px;top:518px;width:30px;height:8px;background:#5d6b3c;"></div>
<div style="left:2666px;top:1012.5px;width:30px;height:9px;background:#8b1a1d;"></div>
<svg style="left:1698px;top:1118px;" width="32" height="28.5" viewBox="0 0 32 28.5"><g fill="none" stroke="#b8b8b8" stroke-width="2.2" stroke-linejoin="miter"><path d="M10.1 6.9 H3.1 Q1.1 6.9 1.1 8.9 V18.5 Q1.1 20.5 3.1 20.5 H4.6 V26.6 L10.6 20.5 H16.5 Q18.5 20.5 18.5 18.5 V16"/><path d="M13.2 1.1 H28.5 Q30.5 1.1 30.5 3.1 V12.8 Q30.5 14.8 28.5 14.8 H27.9 V20.6 L21.8 14.8 H13.2 Q11.2 14.8 11.2 12.8 V3.1 Q11.2 1.1 13.2 1.1 Z"/></g></svg>
<div style="left:1732px;top:1106.5px;width:313.5px;height:56.5px;background:#252526;border:1px solid #4a4a4a"></div>
<span id="t131" class="t" style="top:1122.0px;font-size:26px;left:1744.0px;color:#e0e0e0;letter-spacing:0.106px;">Start New Conversations</span>
<div style="left:728px;top:322px;width:1998px;height:8px;background:linear-gradient(180deg,rgba(0,0,0,.55),rgba(0,0,0,0))"></div>
</div></div>
<div style="left:728px;top:1207px;width:1998px;height:5px;background:#2b2b2b;"></div>
<div style="left:728px;top:1212px;width:1998px;height:50px;background:#2d2d2d;"></div>
<div style="left:1326px;top:1212px;width:374px;height:50px;background:#1e1e1e;"></div>
<div style="left:1700px;top:1212px;width:1026px;height:50px;background:#262626;"></div>
<svg style="left:743.5px;top:1220.5px;" width="24" height="24" viewBox="0 0 24 24"><circle cx="12" cy="12" r="11.2" fill="#e0e0e0"/><rect x="10.2" y="5" width="3.6" height="8.6" rx="1" fill="#2d2d2d"/><rect x="10.2" y="15.6" width="3.6" height="3.6" rx="1" fill="#2d2d2d"/></svg>
<span id="t132" class="t" style="top:1220.0px;font-size:26px;left:775.0px;color:#e0e0e0;letter-spacing:-0.102px;">Problems</span>
<svg style="left:899.6px;top:1225.8px;" width="18" height="18" viewBox="-9.0 -9.0 18 18"><path d="M-8.0 -8.0 L8.0 8.0 M8.0 -8.0 L-8.0 8.0" stroke="#d8d8d8" stroke-width="2" fill="none"/></svg>
<svg style="left:955px;top:1222.5px;" width="26" height="24" viewBox="0 0 26 24"><path d="M2 4 L10 11.5 L2 19" fill="none" stroke="#e0e0e0" stroke-width="2"/><path d="M11 21 H24" stroke="#e0e0e0" stroke-width="2"/></svg>
<span id="t133" class="t" style="top:1220.0px;font-size:26px;left:987.0px;color:#e0e0e0;letter-spacing:0.340px;">gitpod /workspace/theia</span>
<svg style="left:1285.5px;top:1227.0px;" width="18" height="18" viewBox="-9.0 -9.0 18 18"><path d="M-8.0 -8.0 L8.0 8.0 M8.0 -8.0 L-8.0 8.0" stroke="#d8d8d8" stroke-width="2" fill="none"/></svg>
<svg style="left:1344.5px;top:1224px;" width="32" height="28.5" viewBox="0 0 32 28.5"><g fill="none" stroke="#ffffff" stroke-width="2.4" stroke-linejoin="miter"><path d="M10.1 6.9 H3.1 Q1.1 6.9 1.1 8.9 V18.5 Q1.1 20.5 3.1 20.5 H4.6 V26.6 L10.6 20.5 H16.5 Q18.5 20.5 18.5 18.5 V16"/><path d="M13.2 1.1 H28.5 Q30.5 1.1 30.5 3.1 V12.8 Q30.5 14.8 28.5 14.8 H27.9 V20.6 L21.8 14.8 H13.2 Q11.2 14.8 11.2 12.8 V3.1 Q11.2 1.1 13.2 1.1 Z"/></g></svg>
<span id="t134" class="t" style="top:1222.0px;font-size:26px;left:1386.0px;color:#fff;letter-spacing:-0.084px;">Review Conversations</span>
<svg style="left:1659.0px;top:1228.0px;" width="18" height="18" viewBox="-9.0 -9.0 18 18"><path d="M-8.0 -8.0 L8.0 8.0 M8.0 -8.0 L-8.0 8.0" stroke="#e8e8e8" stroke-width="2" fill="none"/></svg>
<svg style="left:735px;top:1277px;" width="16" height="12" viewBox="0 0 16 12"><path d="M1.5 2 H14.5 L8 10.5 Z" fill="#e0e0e0"/></svg>
<svg style="left:763.6px;top:1273.6px;" width="18.6" height="18.6" viewBox="0 0 18 18"><rect width="18" height="18" fill="#b7414b"/><rect x="3.6" y="3.6" width="10.8" height="10.8" fill="#1e1e1e"/><rect x="9.2" y="6.4" width="2.7" height="8" fill="#b7414b"/></svg>
<span id="t135" class="t" style="top:1270.0px;font-size:26px;left:790.0px;color:#e0e0e0;letter-spacing:0.064px;">package.json</span>
<div style="left:964.5px;top:1266px;width:35.5px;height:35.5px;background:#9a9a9a;border-radius:50%"></div>
<span id="t136" class="t" style="top:1276.0px;font-size:17px;left:978.5px;color:#e8e8e8;">1</span>
<div style="left:728px;top:1302px;width:1998px;height:40px;background:#284560;"></div>
<span id="t137" class="t" style="top:1310.0px;font-size:26px;left:796.8px;color:#a8a8a8;letter-spacing:-0.024px;">[kittaakos]</span>
<span id="t138" class="t" style="top:1310.0px;font-size:26px;left:924.0px;color:#fff;letter-spacing:-0.120px;">TODO: remove this.</span>
<svg style="left:159.5px;top:1794.8px;" width="21.5" height="21.5" viewBox="0 0 16 16"><path fill="#fff" d="M8 0C3.58 0 0 3.58 0 8c0 3.54 2.29 6.53 5.47 7.59.4.07.55-.17.55-.38 0-.19-.01-.82-.01-1.49-2.01.37-2.53-.49-2.69-.94-.09-.23-.48-.94-.82-1.13-.28-.15-.68-.52-.01-.53.63-.01 1.08.58 1.23.82.72 1.21 1.87.87 2.33.66.07-.52.28-.87.51-1.07-1.78-.2-3.64-.89-3.64-3.95 0-.87.31-1.59.82-2.15-.08-.2-.36-1.02.08-2.12 0 0 .67-.21 2.2.82.64-.18 1.32-.27 2-.27s1.36.09 2 .27c1.53-1.04 2.2-.82 2.2-.82.44 1.1.16 1.92.08 2.12.51.56.82 1.27.82 2.15 0 3.07-1.87 3.75-3.65 3.95.29.25.54.73.54 1.48 0 1.07-.01 1.93-.01 2.2 0 .21.15.46.55.38A8.013 8.013 0 0016 8c0-4.42-3.58-8-8-8z"/></svg>
<span id="t139" class="t" style="top:1796.0px;font-size:22px;left:188.0px;color:#fff;letter-spacing:0.966px;-webkit-text-stroke:0.75px;">theia-ide/theia#2332</span>
<svg style="left:451px;top:1794px;" width="18" height="24" viewBox="0 0 18 24"><g fill="none" stroke="#fff" stroke-width="1.7"><circle cx="5" cy="4.5" r="2.4"/><circle cx="5" cy="19.5" r="2.4"/><circle cx="13.5" cy="7" r="2.4"/><path d="M5 7 V17 M13.5 9.5 C13.5 13.5 5.5 12.5 5 17"/></g></svg>
<span id="t140" class="t" style="top:1796.0px;font-size:22px;left:474.0px;color:#fff;letter-spacing:1.246px;-webkit-text-stroke:0.75px;">GH-1845</span>
<svg style="left:618px;top:1795.5px;" width="21" height="21" viewBox="0 0 512 512"><path fill="#fff" d="M370.72 133.28C339.458 104.008 298.888 87.962 255.848 88c-77.458.068-144.328 53.178-162.791 126.85-1.344 5.363-6.122 9.15-11.651 9.15H24.103c-7.498 0-13.194-6.807-11.807-14.176C33.933 94.924 134.813 8 256 8c66.448 0 126.791 26.136 171.315 68.685L463.03 40.97C478.149 25.851 504 36.559 504 57.941V192c0 13.255-10.745 24-24 24H345.941c-21.382 0-32.09-25.851-16.971-40.971l41.75-41.749zM32 296h134.059c21.382 0 32.09 25.851 16.971 40.971l-41.75 41.75c31.262 29.273 71.835 45.319 114.876 45.28 77.418-.07 144.315-53.144 162.787-126.849 1.344-5.363 6.122-9.15 11.651-9.15h57.304c7.498 0 13.194 6.807 11.807 14.176C478.067 417.076 377.187 504 256 504c-66.448 0-126.791-26.136-171.315-68.685L48.97 471.03C33.851 486.149 8 475.441 8 454.059V320c0-13.255 10.745-24 24-24z"/></svg>
<span id="t141" class="t" style="top:1796.0px;font-size:22px;left:645.3px;color:#fff;-webkit-text-stroke:0.75px;">0</span>
<svg style="left:659.5px;top:1797px;" width="11" height="23" viewBox="0 0 11 23"><path d="M5.5 1 V20.5 M1.2 16 L5.5 20.8 L9.8 16" fill="none" stroke="#fff" stroke-width="2"/></svg>
<span id="t142" class="t" style="top:1796.0px;font-size:22px;left:678.5px;color:#fff;-webkit-text-stroke:0.75px;">0</span>
<svg style="left:691.7px;top:1797px;" width="11" height="23" viewBox="0 0 11 23"><path d="M5.5 22 V2.5 M1.2 7 L5.5 2.2 L9.8 7" fill="none" stroke="#fff" stroke-width="2"/></svg>
<svg style="left:748.5px;top:1795px;" width="21" height="21" viewBox="0 0 21 21"><circle cx="10.5" cy="10.5" r="10.2" fill="#fff"/><path d="M6.6 6.6 L14.4 14.4 M14.4 6.6 L6.6 14.4" stroke="#2975d3" stroke-width="3"/></svg>
<span id="t143" class="t" style="top:1796.0px;font-size:22px;left:776.6px;color:#fff;-webkit-text-stroke:0.75px;">0</span>
<svg style="left:796px;top:1794.5px;" width="24" height="22" viewBox="0 0 24 22"><path d="M12 .8 C12.8 .8 13.4 1.2 13.8 1.9 L23.4 19 C24.1 20.3 23.2 21.6 21.8 21.6 H2.2 C.8 21.6 -.1 20.3 .6 19 L10.2 1.9 C10.6 1.2 11.2 .8 12 .8Z" fill="#fff"/><path d="M10.4 7.2 H13.6 L13.1 14.4 H10.9Z M10.6 16 H13.4 V18.8 H10.6Z" fill="#2975d3"/></svg>
<span id="t144" class="t" style="top:1796.0px;font-size:22px;left:827.0px;color:#fff;-webkit-text-stroke:0.75px;">0</span>
<span id="t145" class="t" style="top:1796.0px;font-size:22px;left:2534.0px;color:#fff;letter-spacing:0.780px;-webkit-text-stroke:0.75px;">Ln 26, Col 1</span>
<span id="t146" class="t" style="top:1796.0px;font-size:22px;left:2709.8px;color:#fff;letter-spacing:0.995px;-webkit-text-stroke:0.75px;">Spaces: 4</span>
<svg style="left:2862.5px;top:1795px;" width="21.5" height="21.5" viewBox="0 0 22 22"><circle cx="11" cy="11" r="9.2" fill="none" stroke="#fff" stroke-width="2.6"/><path d="M4.8 17.2 L17.2 4.8" stroke="#fff" stroke-width="2.6"/></svg>
<span id="t147" class="t" style="top:1796.0px;font-size:22px;left:2890.6px;color:#fff;letter-spacing:1.215px;-webkit-text-stroke:0.75px;">No open ports</span>
<svg style="left:3090px;top:1796px;" width="26" height="21" viewBox="0 0 26 21"><path d="M9.5 .8 C14.5 .8 18.5 3.8 18.5 7.6 C18.5 11.4 14.5 14.4 9.5 14.4 C8.6 14.4 7.8 14.3 7 14.1 C5.6 15.2 3.6 16 1.6 16 C2.6 15 3.2 13.8 3.3 12.6 C1.6 11.3 .6 9.6 .6 7.6 C.6 3.8 4.6 .8 9.5 .8Z" fill="#fff"/><path d="M20.3 7.2 C23.3 8.2 25.4 10.4 25.4 13 C25.4 14.9 24.3 16.6 22.7 17.8 C22.8 19 23.4 20 24.4 20.8 C22.4 20.8 20.5 20.1 19.1 19.1 C18.3 19.3 17.4 19.4 16.5 19.4 C13.4 19.4 10.7 18.2 9.2 16.3 C14.6 16.4 20.3 13 20.3 7.2Z" fill="#fff"/></svg>
<span id="t148" class="t" style="top:1796.0px;font-size:22px;left:3160.0px;color:#fff;letter-spacing:1.154px;-webkit-text-stroke:0.75px;">JSON</span>
<svg style="left:3270px;top:1794.5px;" width="24" height="21" viewBox="0 0 24 21"><rect x="1.4" y="1.4" width="21.2" height="18.2" rx="1.5" fill="none" stroke="#fff" stroke-width="2.8"/><rect x="1.4" y="1.4" width="21.2" height="6" fill="#fff"/></svg>
<div style="left:3278px;top:398px;width:60px;height:194px;background:#1e1e1e;"></div>
<span class="t" style="position:absolute;left:3322.5px;top:292.0px;font-size:26px;color:#e0e0e0;letter-spacing:0.2px;transform-origin:0 0;transform:rotate(90deg);">Outline</span>
<span class="t" style="position:absolute;left:3322.5px;top:423.7px;font-size:26px;color:#fff;letter-spacing:-0.25px;transform-origin:0 0;transform:rotate(90deg);">Pull Request</span>
<svg style="left:3294px;top:220px" width="40" height="40" viewBox="0 0 40 40"><defs><clipPath id="cu"><circle cx="20" cy="20" r="20"/></clipPath><linearGradient id="sky" x1="0" y1="0" x2="1" y2="1"><stop offset="0" stop-color="#4f7ec9"/><stop offset="1" stop-color="#86a9dd"/></linearGradient></defs><g clip-path="url(#cu)"><rect width="40" height="40" fill="url(#sky)"/><path d="M7 40 C8 33 13 31 20 31 C27 31 32 33 33 40Z" fill="#5a2a33"/><ellipse cx="20" cy="22" rx="8.6" ry="11" fill="#c59a84"/><path d="M8.5 22 C6 10 13 4 20 4 C28 4 33 10 31 21 C29 14 26 11 20 11.5 C14 11 11 15 8.5 22Z" fill="#5d4a3f"/><ellipse cx="16.6" cy="20" rx="1.5" ry=".8" fill="#4a3328"/><ellipse cx="23.6" cy="20" rx="1.5" ry=".8" fill="#4a3328"/><path d="M17 27.5 Q20 29 23 27.5" stroke="#8d5c4c" stroke-width="1" fill="none"/></g></svg>
<div style="left:2766px;top:304px;width:126px;height:52px;background:#2ea54f;border-radius:6px"></div>
<svg style="left:2781px;top:313px;" width="26" height="32" viewBox="0 0 26 32"><g fill="none" stroke="#fff" stroke-width="2.4"><circle cx="5" cy="6" r="3"/><circle cx="5" cy="27" r="3"/><circle cx="21" cy="27" r="3"/><path d="M5 9 V24 M21 24 V11 C21 8 19.5 6.5 16.5 6.5 H13"/></g><path d="M15 1.2 V11.8 L9.2 6.5Z" fill="#fff"/></svg>
<span id="t149" class="t" style="top:315.0px;font-size:26px;left:2814.0px;color:#fff;font-weight:bold;letter-spacing:-1.113px;-webkit-text-stroke:0;">Open</span>
<span id="t150" class="t" style="top:308.0px;font-size:31.2px;left:2913.6px;color:#e0e0e0;letter-spacing:-0.584px;">[WIP] GH-<span style="letter-spacing:2px">…</span></span>
<svg style="left:3088px;top:305.6px;" width="32" height="32" viewBox="0 0 16 16"><path fill="#e0e0e0" d="M8 0C3.58 0 0 3.58 0 8c0 3.54 2.29 6.53 5.47 7.59.4.07.55-.17.55-.38 0-.19-.01-.82-.01-1.49-2.01.37-2.53-.49-2.69-.94-.09-.23-.48-.94-.82-1.13-.28-.15-.68-.52-.01-.53.63-.01 1.08.58 1.23.82.72 1.21 1.87.87 2.33.66.07-.52.28-.87.51-1.07-1.78-.2-3.64-.89-3.64-3.95 0-.87.31-1.59.82-2.15-.08-.2-.36-1.02.08-2.12 0 0 .67-.21 2.2.82.64-.18 1.32-.27 2-.27s1.36.09 2 .27c1.53-1.04 2.2-.82 2.2-.82.44 1.1.16 1.92.08 2.12.51.56.82 1.27.82 2.15 0 3.07-1.87 3.75-3.65 3.95.29.25.54.73.54 1.48 0 1.07-.01 1.93-.01 2.2 0 .21.15.46.55.38A8.013 8.013 0 0016 8c0-4.42-3.58-8-8-8z"/></svg>
<span id="t151" class="t" style="top:310.0px;font-size:26px;left:3127.4px;color:#2b7bd9;letter-spacing:-0.182px;">#2332</span>
<svg style="left:3219px;top:305.5px;" width="23.5" height="23.5" viewBox="0 0 512 512"><path fill="#e0e0e0" d="M370.72 133.28C339.458 104.008 298.888 87.962 255.848 88c-77.458.068-144.328 53.178-162.791 126.85-1.344 5.363-6.122 9.15-11.651 9.15H24.103c-7.498 0-13.194-6.807-11.807-14.176C33.933 94.924 134.813 8 256 8c66.448 0 126.791 26.136 171.315 68.685L463.03 40.97C478.149 25.851 504 36.559 504 57.941V192c0 13.255-10.745 24-24 24H345.941c-21.382 0-32.09-25.851-16.971-40.971l41.75-41.749zM32 296h134.059c21.382 0 32.09 25.851 16.971 40.971l-41.75 41.75c31.262 29.273 71.835 45.319 114.876 45.28 77.418-.07 144.315-53.144 162.787-126.849 1.344-5.363 6.122-9.15 11.651-9.15h57.304c7.498 0 13.194 6.807 11.807 14.176C478.067 417.076 377.187 504 256 504c-66.448 0-126.791-26.136-171.315-68.685L48.97 471.03C33.851 486.149 8 475.441 8 454.059V320c0-13.255 10.745-24 24-24z"/></svg>
<svg style="left:2766px;top:374px;" width="64" height="64" viewBox="0 0 64 64"><defs><clipPath id="c151"><rect x="0" y="0" width="64" height="64" rx="6.0"/></clipPath><filter id="f151" x="-10%" y="-10%" width="120%" height="120%"><feGaussianBlur stdDeviation="0.5"/></filter></defs><g clip-path="url(#c151)"><rect width="64" height="64" fill="#ededed"/><g filter="url(#f151)"><rect x="-4" y="-4" width="72" height="72" fill="#ededed"/><path d="M6 68 L8 58 C9 52 11 48 15 46 L24 40.5 L36 47 L46 40 L52 41 C58 43 63 46 68 50 L68 68 Z" fill="#63666b"/><path d="M12 50 L20 62 M58 50 L50 62 M24 56 L34 66 M44 56 L38 66" stroke="#8b8e92" stroke-width="1.6" fill="none"/><path d="M23.5 40.5 L18 48 L27 50 L33 44.5 Z" fill="#a6a6a6"/><path d="M46 40 L50.5 47.5 L48 54 L38 45 Z" fill="#a9a9a9"/><path d="M29 50 L36 46 L43 52 L37 58 Z" fill="#3d3f43"/><path d="M26 38 L44 38 L41 46 L35 48 L29 45 Z" fill="#262626"/><ellipse cx="18.8" cy="26" rx="2.4" ry="4.6" fill="#a8a8a8"/><ellipse cx="50" cy="25" rx="2.4" ry="4.8" fill="#b4b4b4"/><path d="M20 20 C20 12 26 10 34 10 C43 10 48.5 13 48.5 21 C48.5 32 46 38 41 42.5 C37 46 31 46 27.5 42.5 C22 38 20 30 20 20Z" fill="#d9d9d9"/><path d="M22 30 C23 38 27 43 34 44.5 C30 45.5 26 42 24 38Z" fill="#b5b5b5"/><path d="M17.5 24 C15 12 20 4 31 1 C36 -1 42 -1 45 2 C50 7 51.5 14 50.5 22 C49 18 47 15.5 44 14.5 C40 13.5 36 12.5 31 13.5 C26 14.5 23 15 21.5 19 C20.5 21 19 23 17.5 24Z" fill="#6c6c6c"/><path d="M17.5 24 C15.5 14 19 7 25 4 C22 9 21.5 15 21.5 19 C20.5 21 19 23 17.5 24Z" fill="#2e2e2e"/><path d="M28 6 C33 3 40 3 44 6" stroke="#8c8c8c" stroke-width="1.6" fill="none"/><circle cx="42.6" cy="6" r="1.5" fill="#f4f4f4"/><ellipse cx="27.6" cy="24.6" rx="3.3" ry="1.7" fill="#0c0c0c"/><ellipse cx="40.2" cy="24.2" rx="3.3" ry="1.7" fill="#0c0c0c"/><path d="M23.5 22.6 Q27.5 20.8 31.5 22.8 M36.5 22.6 Q40.5 20.6 44.5 22.4" stroke="#333" stroke-width="1.4" fill="none"/><path d="M31.5 33 Q34.5 34.8 37.5 33" stroke="#7d7d7d" stroke-width="1.5" fill="none"/><path d="M29 38.2 Q35 36.4 45 38.4 Q36 41.2 29 38.2Z" fill="#4a4a4a"/><circle cx="54.5" cy="49.5" r="1.6" fill="#d8d8d8"/></g></g></svg>
<span id="t153" class="t" style="top:375.0px;font-size:26px;left:2850.0px;color:#e0e0e0;letter-spacing:0.232px;">wants to merge <span class="lnk">3 commits</span></span>
<span id="t154" class="t" style="top:405.0px;font-size:26px;left:2850.0px;color:#e0e0e0;letter-spacing:0.623px;">into <span class="lnk">theia-ide/theia<span style="display:inline-block;width:0;height:0;border-left:6.4px solid transparent;border-right:6.4px solid transparent;border-top:7.7px solid #2b7bd9;vertical-align:4px;margin:0 1px 0 3px"></span> master<span style="display:inline-block;width:0;height:0;border-left:6.4px solid transparent;border-right:6.4px solid transparent;border-top:7.7px solid #2b7bd9;vertical-align:4px;margin:0 1px 0 3px"></span></span></span>
<svg style="left:2766px;top:460px;" width="34.5" height="33" viewBox="0 0 24 22"><path d="M12 .8 C12.8 .8 13.4 1.2 13.8 1.9 L23.4 19 C24.1 20.3 23.2 21.6 21.8 21.6 H2.2 C.8 21.6 -.1 20.3 .6 19 L10.2 1.9 C10.6 1.2 11.2 .8 12 .8Z" fill="#e0e0e0"/><path d="M10.4 7.2 H13.6 L13.1 14.4 H10.9Z M10.6 16 H13.4 V18.8 H10.6Z" fill="#1e1e1e"/></svg>
<span id="t155" class="t" style="top:463.0px;font-size:26px;left:2808.6px;color:#e0e0e0;letter-spacing:0.034px;">This branch has</span>
<span id="t156" class="t" style="top:494.0px;font-size:26px;left:2766.0px;color:#e0e0e0;letter-spacing:0.340px;">conflicts that must be</span>
<span id="t157" class="t" style="top:524.0px;font-size:26px;left:2766.0px;color:#e0e0e0;letter-spacing:-0.160px;">resolved</span>
<div style="left:3112px;top:486px;width:130px;height:42px;background:#25426a;box-shadow:0 1px 3px rgba(0,0,0,.4)"></div>
<span id="t158" class="t" style="top:498.0px;font-size:23.4px;left:3144.0px;color:#7d7d7d;letter-spacing:-0.102px;">Merge</span>
<svg style="left:2766px;top:576px;" width="32" height="28.5" viewBox="0 0 32 28.5"><g fill="none" stroke="#e8e8e8" stroke-width="2.4" stroke-linejoin="miter"><path d="M10.1 6.9 H3.1 Q1.1 6.9 1.1 8.9 V18.5 Q1.1 20.5 3.1 20.5 H4.6 V26.6 L10.6 20.5 H16.5 Q18.5 20.5 18.5 18.5 V16"/><path d="M13.2 1.1 H28.5 Q30.5 1.1 30.5 3.1 V12.8 Q30.5 14.8 28.5 14.8 H27.9 V20.6 L21.8 14.8 H13.2 Q11.2 14.8 11.2 12.8 V3.1 Q11.2 1.1 13.2 1.1 Z"/></g></svg>
<span id="t159" class="t" style="top:573.0px;font-size:26px;left:2805.6px;color:#2b7bd9;letter-spacing:0.016px;">Conversations</span>
<div style="left:2986px;top:570px;width:34px;height:34px;background:#6e6e6e;border-radius:50%"></div>
<span id="t160" class="t" style="top:577.0px;font-size:23px;left:2997.8px;color:#1e1e1e;font-weight:bold;">1</span>
<div style="left:3052px;top:570px;width:208px;height:42px;background:#2975d3;box-shadow:0 1px 3px rgba(0,0,0,.4)"></div>
<span id="t161" class="t" style="top:582.0px;font-size:23.4px;left:3069.4px;color:#ececec;letter-spacing:-0.374px;-webkit-text-stroke:0.6px;">Review Changes</span>
<span id="t162" class="t" style="top:658.0px;font-size:26px;left:2779.7px;color:#e0e0e0;letter-spacing:-0.060px;">Closes <span class="lnk">#1845</span></span>
<span id="t163" class="t" style="top:714.0px;font-size:26px;left:2779.7px;color:#e0e0e0;letter-spacing:0.294px;">Signed-off-by: Akos Kitta</span>
<span id="t164" class="t" style="top:744.0px;font-size:26px;left:2779.7px;color:#2b7bd9;letter-spacing:0.011px;">kittaakos@typefox.io</span>
<svg style="left:2775.8px;top:833.0px;" width="32" height="23" viewBox="0 0 32 23"><path d="M16 .5 C23 .5 29 5 31.6 11.5 C29 18 23 22.5 16 22.5 C9 22.5 3 18 .4 11.5 C3 5 9 .5 16 .5Z" fill="#e0e0e0"/><circle cx="16" cy="11.5" r="7.6" fill="#1e1e1e"/><circle cx="16" cy="11.5" r="4.6" fill="#e0e0e0"/><circle cx="14" cy="9.6" r="1.7" fill="#1e1e1e"/></svg>
<svg style="left:2828px;top:818.0px;" width="48" height="48" viewBox="0 0 48 48"><defs><clipPath id="c164"><rect x="0" y="0" width="48" height="48" rx="6.0"/></clipPath><filter id="f164" x="-10%" y="-10%" width="120%" height="120%"><feGaussianBlur stdDeviation="0.5"/></filter><linearGradient id="g164" x1="0" y1="0" x2="1" y2="0"><stop offset="0" stop-color="#d2c9be"/><stop offset="1" stop-color="#b6ab9a"/></linearGradient><linearGradient id="h164" x1="0" y1="0" x2="1" y2="0"><stop offset="0" stop-color="#b98059"/><stop offset=".55" stop-color="#dcbfa9"/><stop offset="1" stop-color="#e8d8cb"/></linearGradient></defs><g clip-path="url(#c164)"><rect width="48" height="48" fill="#c6bcae"/><g filter="url(#f164)"><rect x="-4" y="-4" width="56" height="56" fill="url(#g164)"/><path d="M-4 40 L12 36 L9 52 L-4 52 Z" fill="#170d0b"/><path d="M30 52 L34.8 38.5 L52 44.5 L52 52 Z" fill="#170d0b"/><path d="M12 36.3 L16.5 44 L21 52 L9 52 Z" fill="#f2f2f2"/><path d="M25.5 43 L31 43.5 L29 52 L21.5 52 Z" fill="#f4f4f4"/><path d="M14 30 L26 36 L31 43 L25.5 44 L21 52 L16 43 Z" fill="#b8794f"/><path d="M16 22 C16 14 22 12 30 12.5 C36 13 39.5 16 39.5 22 C39.5 30 38 36 35 40 C32 43.5 27 43.5 23 40 C18 35 16 30 16 22Z" fill="url(#h164)"/><ellipse cx="13" cy="25" rx="2.6" ry="5" fill="#9e6446"/><path d="M11 30 C8 20 8 10 16 5 C22 1 32 1 37 6 C40 9 41 13 40 17 C38 14.5 35 13 31 12.6 C27 12.2 24 13 22.5 15.5 C20.5 19 19 24 17.5 28 C16 31 13 32 11 30Z" fill="#170b07"/><ellipse cx="26" cy="25.6" rx="2.4" ry="1" fill="#5a2f25"/><ellipse cx="36.6" cy="25.2" rx="1.8" ry=".9" fill="#5a2f25"/><path d="M22.5 23.6 Q26 22.4 29.5 23.6" stroke="#7a4a38" stroke-width=".9" fill="none"/><path d="M31 27 L33.5 32 L30 32.6 Z" fill="#c08a68"/><path d="M27.5 36.6 Q31 35.6 34.5 36.6 Q31 38.4 27.5 36.6Z" fill="#c2777a"/></g></g></svg>
<span id="t166" class="t" style="top:832.0px;font-size:26px;left:2896.0px;color:#e0e0e0;letter-spacing:0.018px;"><b class="lnk">akosyakov</b> reviewed 21 da<span style="letter-spacing:2px">…</span></span>
<div style="left:2826px;top:892px;width:416px;height:2px;background:#303030;"></div>
<svg style="left:2775.8px;top:929.0px;" width="32" height="23" viewBox="0 0 32 23"><path d="M16 .5 C23 .5 29 5 31.6 11.5 C29 18 23 22.5 16 22.5 C9 22.5 3 18 .4 11.5 C3 5 9 .5 16 .5Z" fill="#e0e0e0"/><circle cx="16" cy="11.5" r="7.6" fill="#1e1e1e"/><circle cx="16" cy="11.5" r="4.6" fill="#e0e0e0"/><circle cx="14" cy="9.6" r="1.7" fill="#1e1e1e"/></svg>
<svg style="left:2828px;top:914.0px;" width="48" height="48" viewBox="0 0 48 48"><defs><clipPath id="c166"><rect x="0" y="0" width="48" height="48" rx="6.0"/></clipPath><filter id="f166" x="-10%" y="-10%" width="120%" height="120%"><feGaussianBlur stdDeviation="0.5"/></filter><linearGradient id="g166" x1="0" y1="0" x2="1" y2="0"><stop offset="0" stop-color="#d2c9be"/><stop offset="1" stop-color="#b6ab9a"/></linearGradient><linearGradient id="h166" x1="0" y1="0" x2="1" y2="0"><stop offset="0" stop-color="#b98059"/><stop offset=".55" stop-color="#dcbfa9"/><stop offset="1" stop-color="#e8d8cb"/></linearGradient></defs><g clip-path="url(#c166)"><rect width="48" height="48" fill="#c6bcae"/><g filter="url(#f166)"><rect x="-4" y="-4" width="56" height="56" fill="url(#g166)"/><path d="M-4 40 L12 36 L9 52 L-4 52 Z" fill="#170d0b"/><path d="M30 52 L34.8 38.5 L52 44.5 L52 52 Z" fill="#170d0b"/><path d="M12 36.3 L16.5 44 L21 52 L9 52 Z" fill="#f2f2f2"/><path d="M25.5 43 L31 43.5 L29 52 L21.5 52 Z" fill="#f4f4f4"/><path d="M14 30 L26 36 L31 43 L25.5 44 L21 52 L16 43 Z" fill="#b8794f"/><path d="M16 22 C16 14 22 12 30 12.5 C36 13 39.5 16 39.5 22 C39.5 30 38 36 35 40 C32 43.5 27 43.5 23 40 C18 35 16 30 16 22Z" fill="url(#h166)"/><ellipse cx="13" cy="25" rx="2.6" ry="5" fill="#9e6446"/><path d="M11 30 C8 20 8 10 16 5 C22 1 32 1 37 6 C40 9 41 13 40 17 C38 14.5 35 13 31 12.6 C27 12.2 24 13 22.5 15.5 C20.5 19 19 24 17.5 28 C16 31 13 32 11 30Z" fill="#170b07"/><ellipse cx="26" cy="25.6" rx="2.4" ry="1" fill="#5a2f25"/><ellipse cx="36.6" cy="25.2" rx="1.8" ry=".9" fill="#5a2f25"/><path d="M22.5 23.6 Q26 22.4 29.5 23.6" stroke="#7a4a38" stroke-width=".9" fill="none"/><path d="M31 27 L33.5 32 L30 32.6 Z" fill="#c08a68"/><path d="M27.5 36.6 Q31 35.6 34.5 36.6 Q31 38.4 27.5 36.6Z" fill="#c2777a"/></g></g></svg>
<span id="t168" class="t" style="top:928.0px;font-size:26px;left:2896.0px;color:#e0e0e0;letter-spacing:0.018px;"><b class="lnk">akosyakov</b> reviewed 21 da<span style="letter-spacing:2px">…</span></span>
<div style="left:2826px;top:988px;width:416px;height:2px;background:#303030;"></div>
<svg style="left:2775.8px;top:1025.0px;" width="32" height="23" viewBox="0 0 32 23"><path d="M16 .5 C23 .5 29 5 31.6 11.5 C29 18 23 22.5 16 22.5 C9 22.5 3 18 .4 11.5 C3 5 9 .5 16 .5Z" fill="#e0e0e0"/><circle cx="16" cy="11.5" r="7.6" fill="#1e1e1e"/><circle cx="16" cy="11.5" r="4.6" fill="#e0e0e0"/><circle cx="14" cy="9.6" r="1.7" fill="#1e1e1e"/></svg>
<svg style="left:2828px;top:1010.0px;" width="48" height="48" viewBox="0 0 64 64"><defs><clipPath id="c168"><rect x="0" y="0" width="64" height="64" rx="8.0"/></clipPath><filter id="f168" x="-10%" y="-10%" width="120%" height="120%"><feGaussianBlur stdDeviation="0.5"/></filter></defs><g clip-path="url(#c168)"><rect width="64" height="64" fill="#ededed"/><g filter="url(#f168)"><rect x="-4" y="-4" width="72" height="72" fill="#ededed"/><path d="M6 68 L8 58 C9 52 11 48 15 46 L24 40.5 L36 47 L46 40 L52 41 C58 43 63 46 68 50 L68 68 Z" fill="#63666b"/><path d="M12 50 L20 62 M58 50 L50 62 M24 56 L34 66 M44 56 L38 66" stroke="#8b8e92" stroke-width="1.6" fill="none"/><path d="M23.5 40.5 L18 48 L27 50 L33 44.5 Z" fill="#a6a6a6"/><path d="M46 40 L50.5 47.5 L48 54 L38 45 Z" fill="#a9a9a9"/><path d="M29 50 L36 46 L43 52 L37 58 Z" fill="#3d3f43"/><path d="M26 38 L44 38 L41 46 L35 48 L29 45 Z" fill="#262626"/><ellipse cx="18.8" cy="26" rx="2.4" ry="4.6" fill="#a8a8a8"/><ellipse cx="50" cy="25" rx="2.4" ry="4.8" fill="#b4b4b4"/><path d="M20 20 C20 12 26 10 34 10 C43 10 48.5 13 48.5 21 C48.5 32 46 38 41 42.5 C37 46 31 46 27.5 42.5 C22 38 20 30 20 20Z" fill="#d9d9d9"/><path d="M22 30 C23 38 27 43 34 44.5 C30 45.5 26 42 24 38Z" fill="#b5b5b5"/><path d="M17.5 24 C15 12 20 4 31 1 C36 -1 42 -1 45 2 C50 7 51.5 14 50.5 22 C49 18 47 15.5 44 14.5 C40 13.5 36 12.5 31 13.5 C26 14.5 23 15 21.5 19 C20.5 21 19 23 17.5 24Z" fill="#6c6c6c"/><path d="M17.5 24 C15.5 14 19 7 25 4 C22 9 21.5 15 21.5 19 C20.5 21 19 23 17.5 24Z" fill="#2e2e2e"/><path d="M28 6 C33 3 40 3 44 6" stroke="#8c8c8c" stroke-width="1.6" fill="none"/><circle cx="42.6" cy="6" r="1.5" fill="#f4f4f4"/><ellipse cx="27.6" cy="24.6" rx="3.3" ry="1.7" fill="#0c0c0c"/><ellipse cx="40.2" cy="24.2" rx="3.3" ry="1.7" fill="#0c0c0c"/><path d="M23.5 22.6 Q27.5 20.8 31.5 22.8 M36.5 22.6 Q40.5 20.6 44.5 22.4" stroke="#333" stroke-width="1.4" fill="none"/><path d="M31.5 33 Q34.5 34.8 37.5 33" stroke="#7d7d7d" stroke-width="1.5" fill="none"/><path d="M29 38.2 Q35 36.4 45 38.4 Q36 41.2 29 38.2Z" fill="#4a4a4a"/><circle cx="54.5" cy="49.5" r="1.6" fill="#d8d8d8"/></g></g></svg>
<span id="t170" class="t" style="top:1024.0px;font-size:26px;left:2896.0px;color:#e0e0e0;letter-spacing:0.074px;"><b class="lnk">kittaakos</b> reviewed 5 days <span style="letter-spacing:2px">…</span></span>
<div style="left:2826px;top:1084px;width:416px;height:2px;background:#303030;"></div>
<svg style="left:2775.8px;top:1121.0px;" width="32" height="23" viewBox="0 0 32 23"><path d="M16 .5 C23 .5 29 5 31.6 11.5 C29 18 23 22.5 16 22.5 C9 22.5 3 18 .4 11.5 C3 5 9 .5 16 .5Z" fill="#e0e0e0"/><circle cx="16" cy="11.5" r="7.6" fill="#1e1e1e"/><circle cx="16" cy="11.5" r="4.6" fill="#e0e0e0"/><circle cx="14" cy="9.6" r="1.7" fill="#1e1e1e"/></svg>
<svg style="left:2828px;top:1106.0px;" width="48" height="48" viewBox="0 0 64 64"><defs><clipPath id="c170"><rect x="0" y="0" width="64" height="64" rx="8.0"/></clipPath><filter id="f170" x="-10%" y="-10%" width="120%" height="120%"><feGaussianBlur stdDeviation="0.5"/></filter></defs><g clip-path="url(#c170)"><rect width="64" height="64" fill="#ededed"/><g filter="url(#f170)"><rect x="-4" y="-4" width="72" height="72" fill="#ededed"/><path d="M6 68 L8 58 C9 52 11 48 15 46 L24 40.5 L36 47 L46 40 L52 41 C58 43 63 46 68 50 L68 68 Z" fill="#63666b"/><path d="M12 50 L20 62 M58 50 L50 62 M24 56 L34 66 M44 56 L38 66" stroke="#8b8e92" stroke-width="1.6" fill="none"/><path d="M23.5 40.5 L18 48 L27 50 L33 44.5 Z" fill="#a6a6a6"/><path d="M46 40 L50.5 47.5 L48 54 L38 45 Z" fill="#a9a9a9"/><path d="M29 50 L36 46 L43 52 L37 58 Z" fill="#3d3f43"/><path d="M26 38 L44 38 L41 46 L35 48 L29 45 Z" fill="#262626"/><ellipse cx="18.8" cy="26" rx="2.4" ry="4.6" fill="#a8a8a8"/><ellipse cx="50" cy="25" rx="2.4" ry="4.8" fill="#b4b4b4"/><path d="M20 20 C20 12 26 10 34 10 C43 10 48.5 13 48.5 21 C48.5 32 46 38 41 42.5 C37 46 31 46 27.5 42.5 C22 38 20 30 20 20Z" fill="#d9d9d9"/><path d="M22 30 C23 38 27 43 34 44.5 C30 45.5 26 42 24 38Z" fill="#b5b5b5"/><path d="M17.5 24 C15 12 20 4 31 1 C36 -1 42 -1 45 2 C50 7 51.5 14 50.5 22 C49 18 47 15.5 44 14.5 C40 13.5 36 12.5 31 13.5 C26 14.5 23 15 21.5 19 C20.5 21 19 23 17.5 24Z" fill="#6c6c6c"/><path d="M17.5 24 C15.5 14 19 7 25 4 C22 9 21.5 15 21.5 19 C20.5 21 19 23 17.5 24Z" fill="#2e2e2e"/><path d="M28 6 C33 3 40 3 44 6" stroke="#8c8c8c" stroke-width="1.6" fill="none"/><circle cx="42.6" cy="6" r="1.5" fill="#f4f4f4"/><ellipse cx="27.6" cy="24.6" rx="3.3" ry="1.7" fill="#0c0c0c"/><ellipse cx="40.2" cy="24.2" rx="3.3" ry="1.7" fill="#0c0c0c"/><path d="M23.5 22.6 Q27.5 20.8 31.5 22.8 M36.5 22.6 Q40.5 20.6 44.5 22.4" stroke="#333" stroke-width="1.4" fill="none"/><path d="M31.5 33 Q34.5 34.8 37.5 33" stroke="#7d7d7d" stroke-width="1.5" fill="none"/><path d="M29 38.2 Q35 36.4 45 38.4 Q36 41.2 29 38.2Z" fill="#4a4a4a"/><circle cx="54.5" cy="49.5" r="1.6" fill="#d8d8d8"/></g></g></svg>
<span id="t172" class="t" style="top:1120.0px;font-size:26px;left:2896.0px;color:#e0e0e0;letter-spacing:0.074px;"><b class="lnk">kittaakos</b> reviewed 5 days <span style="letter-spacing:2px">…</span></span>
<div style="left:2826px;top:1180px;width:416px;height:2px;background:#303030;"></div>
<svg style="left:2775.8px;top:1217.0px;" width="32" height="23" viewBox="0 0 32 23"><path d="M16 .5 C23 .5 29 5 31.6 11.5 C29 18 23 22.5 16 22.5 C9 22.5 3 18 .4 11.5 C3 5 9 .5 16 .5Z" fill="#e0e0e0"/><circle cx="16" cy="11.5" r="7.6" fill="#1e1e1e"/><circle cx="16" cy="11.5" r="4.6" fill="#e0e0e0"/><circle cx="14" cy="9.6" r="1.7" fill="#1e1e1e"/></svg>
<svg style="left:2828px;top:1202.0px;" width="48" height="48" viewBox="0 0 64 64"><defs><clipPath id="c172"><rect x="0" y="0" width="64" height="64" rx="8.0"/></clipPath><filter id="f172" x="-10%" y="-10%" width="120%" height="120%"><feGaussianBlur stdDeviation="0.5"/></filter></defs><g clip-path="url(#c172)"><rect width="64" height="64" fill="#ededed"/><g filter="url(#f172)"><rect x="-4" y="-4" width="72" height="72" fill="#ededed"/><path d="M6 68 L8 58 C9 52 11 48 15 46 L24 40.5 L36 47 L46 40 L52 41 C58 43 63 46 68 50 L68 68 Z" fill="#63666b"/><path d="M12 50 L20 62 M58 50 L50 62 M24 56 L34 66 M44 56 L38 66" stroke="#8b8e92" stroke-width="1.6" fill="none"/><path d="M23.5 40.5 L18 48 L27 50 L33 44.5 Z" fill="#a6a6a6"/><path d="M46 40 L50.5 47.5 L48 54 L38 45 Z" fill="#a9a9a9"/><path d="M29 50 L36 46 L43 52 L37 58 Z" fill="#3d3f43"/><path d="M26 38 L44 38 L41 46 L35 48 L29 45 Z" fill="#262626"/><ellipse cx="18.8" cy="26" rx="2.4" ry="4.6" fill="#a8a8a8"/><ellipse cx="50" cy="25" rx="2.4" ry="4.8" fill="#b4b4b4"/><path d="M20 20 C20 12 26 10 34 10 C43 10 48.5 13 48.5 21 C48.5 32 46 38 41 42.5 C37 46 31 46 27.5 42.5 C22 38 20 30 20 20Z" fill="#d9d9d9"/><path d="M22 30 C23 38 27 43 34 44.5 C30 45.5 26 42 24 38Z" fill="#b5b5b5"/><path d="M17.5 24 C15 12 20 4 31 1 C36 -1 42 -1 45 2 C50 7 51.5 14 50.5 22 C49 18 47 15.5 44 14.5 C40 13.5 36 12.5 31 13.5 C26 14.5 23 15 21.5 19 C20.5 21 19 23 17.5 24Z" fill="#6c6c6c"/><path d="M17.5 24 C15.5 14 19 7 25 4 C22 9 21.5 15 21.5 19 C20.5 21 19 23 17.5 24Z" fill="#2e2e2e"/><path d="M28 6 C33 3 40 3 44 6" stroke="#8c8c8c" stroke-width="1.6" fill="none"/><circle cx="42.6" cy="6" r="1.5" fill="#f4f4f4"/><ellipse cx="27.6" cy="24.6" rx="3.3" ry="1.7" fill="#0c0c0c"/><ellipse cx="40.2" cy="24.2" rx="3.3" ry="1.7" fill="#0c0c0c"/><path d="M23.5 22.6 Q27.5 20.8 31.5 22.8 M36.5 22.6 Q40.5 20.6 44.5 22.4" stroke="#333" stroke-width="1.4" fill="none"/><path d="M31.5 33 Q34.5 34.8 37.5 33" stroke="#7d7d7d" stroke-width="1.5" fill="none"/><path d="M29 38.2 Q35 36.4 45 38.4 Q36 41.2 29 38.2Z" fill="#4a4a4a"/><circle cx="54.5" cy="49.5" r="1.6" fill="#d8d8d8"/></g></g></svg>
<span id="t174" class="t" style="top:1216.0px;font-size:26px;left:2896.0px;color:#e0e0e0;letter-spacing:0.074px;"><b class="lnk">kittaakos</b> reviewed 5 days <span style="letter-spacing:2px">…</span></span>
<div style="left:2826px;top:1276px;width:416px;height:2px;background:#303030;"></div>
<svg style="left:2775.8px;top:1313.0px;" width="32" height="23" viewBox="0 0 32 23"><path d="M16 .5 C23 .5 29 5 31.6 11.5 C29 18 23 22.5 16 22.5 C9 22.5 3 18 .4 11.5 C3 5 9 .5 16 .5Z" fill="#e0e0e0"/><circle cx="16" cy="11.5" r="7.6" fill="#1e1e1e"/><circle cx="16" cy="11.5" r="4.6" fill="#e0e0e0"/><circle cx="14" cy="9.6" r="1.7" fill="#1e1e1e"/></svg>
<svg style="left:2828px;top:1298.0px;" width="48" height="48" viewBox="0 0 64 64"><defs><clipPath id="c174"><rect x="0" y="0" width="64" height="64" rx="8.0"/></clipPath><filter id="f174" x="-10%" y="-10%" width="120%" height="120%"><feGaussianBlur stdDeviation="0.5"/></filter></defs><g clip-path="url(#c174)"><rect width="64" height="64" fill="#ededed"/><g filter="url(#f174)"><rect x="-4" y="-4" width="72" height="72" fill="#ededed"/><path d="M6 68 L8 58 C9 52 11 48 15 46 L24 40.5 L36 47 L46 40 L52 41 C58 43 63 46 68 50 L68 68 Z" fill="#63666b"/><path d="M12 50 L20 62 M58 50 L50 62 M24 56 L34 66 M44 56 L38 66" stroke="#8b8e92" stroke-width="1.6" fill="none"/><path d="M23.5 40.5 L18 48 L27 50 L33 44.5 Z" fill="#a6a6a6"/><path d="M46 40 L50.5 47.5 L48 54 L38 45 Z" fill="#a9a9a9"/><path d="M29 50 L36 46 L43 52 L37 58 Z" fill="#3d3f43"/><path d="M26 38 L44 38 L41 46 L35 48 L29 45 Z" fill="#262626"/><ellipse cx="18.8" cy="26" rx="2.4" ry="4.6" fill="#a8a8a8"/><ellipse cx="50" cy="25" rx="2.4" ry="4.8" fill="#b4b4b4"/><path d="M20 20 C20 12 26 10 34 10 C43 10 48.5 13 48.5 21 C48.5 32 46 38 41 42.5 C37 46 31 46 27.5 42.5 C22 38 20 30 20 20Z" fill="#d9d9d9"/><path d="M22 30 C23 38 27 43 34 44.5 C30 45.5 26 42 24 38Z" fill="#b5b5b5"/><path d="M17.5 24 C15 12 20 4 31 1 C36 -1 42 -1 45 2 C50 7 51.5 14 50.5 22 C49 18 47 15.5 44 14.5 C40 13.5 36 12.5 31 13.5 C26 14.5 23 15 21.5 19 C20.5 21 19 23 17.5 24Z" fill="#6c6c6c"/><path d="M17.5 24 C15.5 14 19 7 25 4 C22 9 21.5 15 21.5 19 C20.5 21 19 23 17.5 24Z" fill="#2e2e2e"/><path d="M28 6 C33 3 40 3 44 6" stroke="#8c8c8c" stroke-width="1.6" fill="none"/><circle cx="42.6" cy="6" r="1.5" fill="#f4f4f4"/><ellipse cx="27.6" cy="24.6" rx="3.3" ry="1.7" fill="#0c0c0c"/><ellipse cx="40.2" cy="24.2" rx="3.3" ry="1.7" fill="#0c0c0c"/><path d="M23.5 22.6 Q27.5 20.8 31.5 22.8 M36.5 22.6 Q40.5 20.6 44.5 22.4" stroke="#333" stroke-width="1.4" fill="none"/><path d="M31.5 33 Q34.5 34.8 37.5 33" stroke="#7d7d7d" stroke-width="1.5" fill="none"/><path d="M29 38.2 Q35 36.4 45 38.4 Q36 41.2 29 38.2Z" fill="#4a4a4a"/><circle cx="54.5" cy="49.5" r="1.6" fill="#d8d8d8"/></g></g></svg>
<span id="t176" class="t" style="top:1312.0px;font-size:26px;left:2896.0px;color:#e0e0e0;letter-spacing:0.074px;"><b class="lnk">kittaakos</b> reviewed 5 days <span style="letter-spacing:2px">…</span></span>
<div style="left:2826px;top:1372px;width:416px;height:2px;background:#303030;"></div>
<svg style="left:2779px;top:1394px;" width="27" height="33" viewBox="0 0 27 33"><g fill="none" stroke="#e0e0e0" stroke-width="2"><path d="M10 26 H2.2 V2 H24.8 V26 H18"/><path d="M2.2 21.5 H9 M19 21.5 H24.8"/></g><path d="M6 5 H8 V7 H6Z M6 9 H8 V11 H6Z M6 13 H8 V15 H6Z" fill="#e0e0e0"/><path d="M14 12.5 L21 21 H16.2 V32 H11.8 V21 H7Z" fill="#e0e0e0"/></svg>
<span id="t177" class="t" style="top:1397.0px;font-size:26px;left:2824.0px;color:#e0e0e0;letter-spacing:0.162px;"><b class="lnk">kittaakos</b> added some commits <span style="letter-spacing:2px">…</span></span>
<svg style="left:2778px;top:1462.8999999999999px;" width="29" height="18" viewBox="0 0 29 18"><circle cx="14.5" cy="9" r="5.6" fill="none" stroke="#e0e0e0" stroke-width="3"/><path d="M0 9 H8 M21 9 H29" stroke="#e0e0e0" stroke-width="3"/></svg>
<svg style="left:2828px;top:1445.6px;" width="48" height="48" viewBox="0 0 64 64"><defs><clipPath id="c177"><rect x="0" y="0" width="64" height="64" rx="8.0"/></clipPath><filter id="f177" x="-10%" y="-10%" width="120%" height="120%"><feGaussianBlur stdDeviation="0.5"/></filter></defs><g clip-path="url(#c177)"><rect width="64" height="64" fill="#ededed"/><g filter="url(#f177)"><rect x="-4" y="-4" width="72" height="72" fill="#ededed"/><path d="M6 68 L8 58 C9 52 11 48 15 46 L24 40.5 L36 47 L46 40 L52 41 C58 43 63 46 68 50 L68 68 Z" fill="#63666b"/><path d="M12 50 L20 62 M58 50 L50 62 M24 56 L34 66 M44 56 L38 66" stroke="#8b8e92" stroke-width="1.6" fill="none"/><path d="M23.5 40.5 L18 48 L27 50 L33 44.5 Z" fill="#a6a6a6"/><path d="M46 40 L50.5 47.5 L48 54 L38 45 Z" fill="#a9a9a9"/><path d="M29 50 L36 46 L43 52 L37 58 Z" fill="#3d3f43"/><path d="M26 38 L44 38 L41 46 L35 48 L29 45 Z" fill="#262626"/><ellipse cx="18.8" cy="26" rx="2.4" ry="4.6" fill="#a8a8a8"/><ellipse cx="50" cy="25" rx="2.4" ry="4.8" fill="#b4b4b4"/><path d="M20 20 C20 12 26 10 34 10 C43 10 48.5 13 48.5 21 C48.5 32 46 38 41 42.5 C37 46 31 46 27.5 42.5 C22 38 20 30 20 20Z" fill="#d9d9d9"/><path d="M22 30 C23 38 27 43 34 44.5 C30 45.5 26 42 24 38Z" fill="#b5b5b5"/><path d="M17.5 24 C15 12 20 4 31 1 C36 -1 42 -1 45 2 C50 7 51.5 14 50.5 22 C49 18 47 15.5 44 14.5 C40 13.5 36 12.5 31 13.5 C26 14.5 23 15 21.5 19 C20.5 21 19 23 17.5 24Z" fill="#6c6c6c"/><path d="M17.5 24 C15.5 14 19 7 25 4 C22 9 21.5 15 21.5 19 C20.5 21 19 23 17.5 24Z" fill="#2e2e2e"/><path d="M28 6 C33 3 40 3 44 6" stroke="#8c8c8c" stroke-width="1.6" fill="none"/><circle cx="42.6" cy="6" r="1.5" fill="#f4f4f4"/><ellipse cx="27.6" cy="24.6" rx="3.3" ry="1.7" fill="#0c0c0c"/><ellipse cx="40.2" cy="24.2" rx="3.3" ry="1.7" fill="#0c0c0c"/><path d="M23.5 22.6 Q27.5 20.8 31.5 22.8 M36.5 22.6 Q40.5 20.6 44.5 22.4" stroke="#333" stroke-width="1.4" fill="none"/><path d="M31.5 33 Q34.5 34.8 37.5 33" stroke="#7d7d7d" stroke-width="1.5" fill="none"/><path d="M29 38.2 Q35 36.4 45 38.4 Q36 41.2 29 38.2Z" fill="#4a4a4a"/><circle cx="54.5" cy="49.5" r="1.6" fill="#d8d8d8"/></g></g></svg>
<span id="t179" class="t" style="top:1459.0px;font-size:26px;left:2896.0px;color:#e0e0e0;letter-spacing:-0.086px;"><span class="lnk">GH-1845</span>: Extende<span style="letter-spacing:1px">…</span></span>
<span id="t180" class="t" style="top:1459.0px;font-size:26px;right:212.5px;color:#e0e0e0;letter-spacing:0.1px;">e7b8224</span>
<svg style="left:2778px;top:1516.8999999999999px;" width="29" height="18" viewBox="0 0 29 18"><circle cx="14.5" cy="9" r="5.6" fill="none" stroke="#e0e0e0" stroke-width="3"/><path d="M0 9 H8 M21 9 H29" stroke="#e0e0e0" stroke-width="3"/></svg>
<svg style="left:2828px;top:1499.6px;" width="48" height="48" viewBox="0 0 64 64"><defs><clipPath id="c180"><rect x="0" y="0" width="64" height="64" rx="8.0"/></clipPath><filter id="f180" x="-10%" y="-10%" width="120%" height="120%"><feGaussianBlur stdDeviation="0.5"/></filter></defs><g clip-path="url(#c180)"><rect width="64" height="64" fill="#ededed"/><g filter="url(#f180)"><rect x="-4" y="-4" width="72" height="72" fill="#ededed"/><path d="M6 68 L8 58 C9 52 11 48 15 46 L24 40.5 L36 47 L46 40 L52 41 C58 43 63 46 68 50 L68 68 Z" fill="#63666b"/><path d="M12 50 L20 62 M58 50 L50 62 M24 56 L34 66 M44 56 L38 66" stroke="#8b8e92" stroke-width="1.6" fill="none"/><path d="M23.5 40.5 L18 48 L27 50 L33 44.5 Z" fill="#a6a6a6"/><path d="M46 40 L50.5 47.5 L48 54 L38 45 Z" fill="#a9a9a9"/><path d="M29 50 L36 46 L43 52 L37 58 Z" fill="#3d3f43"/><path d="M26 38 L44 38 L41 46 L35 48 L29 45 Z" fill="#262626"/><ellipse cx="18.8" cy="26" rx="2.4" ry="4.6" fill="#a8a8a8"/><ellipse cx="50" cy="25" rx="2.4" ry="4.8" fill="#b4b4b4"/><path d="M20 20 C20 12 26 10 34 10 C43 10 48.5 13 48.5 21 C48.5 32 46 38 41 42.5 C37 46 31 46 27.5 42.5 C22 38 20 30 20 20Z" fill="#d9d9d9"/><path d="M22 30 C23 38 27 43 34 44.5 C30 45.5 26 42 24 38Z" fill="#b5b5b5"/><path d="M17.5 24 C15 12 20 4 31 1 C36 -1 42 -1 45 2 C50 7 51.5 14 50.5 22 C49 18 47 15.5 44 14.5 C40 13.5 36 12.5 31 13.5 C26 14.5 23 15 21.5 19 C20.5 21 19 23 17.5 24Z" fill="#6c6c6c"/><path d="M17.5 24 C15.5 14 19 7 25 4 C22 9 21.5 15 21.5 19 C20.5 21 19 23 17.5 24Z" fill="#2e2e2e"/><path d="M28 6 C33 3 40 3 44 6" stroke="#8c8c8c" stroke-width="1.6" fill="none"/><circle cx="42.6" cy="6" r="1.5" fill="#f4f4f4"/><ellipse cx="27.6" cy="24.6" rx="3.3" ry="1.7" fill="#0c0c0c"/><ellipse cx="40.2" cy="24.2" rx="3.3" ry="1.7" fill="#0c0c0c"/><path d="M23.5 22.6 Q27.5 20.8 31.5 22.8 M36.5 22.6 Q40.5 20.6 44.5 22.4" stroke="#333" stroke-width="1.4" fill="none"/><path d="M31.5 33 Q34.5 34.8 37.5 33" stroke="#7d7d7d" stroke-width="1.5" fill="none"/><path d="M29 38.2 Q35 36.4 45 38.4 Q36 41.2 29 38.2Z" fill="#4a4a4a"/><circle cx="54.5" cy="49.5" r="1.6" fill="#d8d8d8"/></g></g></svg>
<span id="t182" class="t" style="top:1513.0px;font-size:26px;left:2896.0px;color:#e0e0e0;letter-spacing:0.152px;">Added new scope<span style="letter-spacing:1px">…</span></span>
<span id="t183" class="t" style="top:1513.0px;font-size:26px;right:212.5px;color:#e0e0e0;letter-spacing:0.1px;">621ee23</span>
<svg style="left:2778px;top:1570.8999999999999px;" width="29" height="18" viewBox="0 0 29 18"><circle cx="14.5" cy="9" r="5.6" fill="none" stroke="#e0e0e0" stroke-width="3"/><path d="M0 9 H8 M21 9 H29" stroke="#e0e0e0" stroke-width="3"/></svg>
<svg style="left:2828px;top:1553.6px;" width="48" height="48" viewBox="0 0 64 64"><defs><clipPath id="c183"><rect x="0" y="0" width="64" height="64" rx="8.0"/></clipPath><filter id="f183" x="-10%" y="-10%" width="120%" height="120%"><feGaussianBlur stdDeviation="0.5"/></filter></defs><g clip-path="url(#c183)"><rect width="64" height="64" fill="#ededed"/><g filter="url(#f183)"><rect x="-4" y="-4" width="72" height="72" fill="#ededed"/><path d="M6 68 L8 58 C9 52 11 48 15 46 L24 40.5 L36 47 L46 40 L52 41 C58 43 63 46 68 50 L68 68 Z" fill="#63666b"/><path d="M12 50 L20 62 M58 50 L50 62 M24 56 L34 66 M44 56 L38 66" stroke="#8b8e92" stroke-width="1.6" fill="none"/><path d="M23.5 40.5 L18 48 L27 50 L33 44.5 Z" fill="#a6a6a6"/><path d="M46 40 L50.5 47.5 L48 54 L38 45 Z" fill="#a9a9a9"/><path d="M29 50 L36 46 L43 52 L37 58 Z" fill="#3d3f43"/><path d="M26 38 L44 38 L41 46 L35 48 L29 45 Z" fill="#262626"/><ellipse cx="18.8" cy="26" rx="2.4" ry="4.6" fill="#a8a8a8"/><ellipse cx="50" cy="25" rx="2.4" ry="4.8" fill="#b4b4b4"/><path d="M20 20 C20 12 26 10 34 10 C43 10 48.5 13 48.5 21 C48.5 32 46 38 41 42.5 C37 46 31 46 27.5 42.5 C22 38 20 30 20 20Z" fill="#d9d9d9"/><path d="M22 30 C23 38 27 43 34 44.5 C30 45.5 26 42 24 38Z" fill="#b5b5b5"/><path d="M17.5 24 C15 12 20 4 31 1 C36 -1 42 -1 45 2 C50 7 51.5 14 50.5 22 C49 18 47 15.5 44 14.5 C40 13.5 36 12.5 31 13.5 C26 14.5 23 15 21.5 19 C20.5 21 19 23 17.5 24Z" fill="#6c6c6c"/><path d="M17.5 24 C15.5 14 19 7 25 4 C22 9 21.5 15 21.5 19 C20.5 21 19 23 17.5 24Z" fill="#2e2e2e"/><path d="M28 6 C33 3 40 3 44 6" stroke="#8c8c8c" stroke-width="1.6" fill="none"/><circle cx="42.6" cy="6" r="1.5" fill="#f4f4f4"/><ellipse cx="27.6" cy="24.6" rx="3.3" ry="1.7" fill="#0c0c0c"/><ellipse cx="40.2" cy="24.2" rx="3.3" ry="1.7" fill="#0c0c0c"/><path d="M23.5 22.6 Q27.5 20.8 31.5 22.8 M36.5 22.6 Q40.5 20.6 44.5 22.4" stroke="#333" stroke-width="1.4" fill="none"/><path d="M31.5 33 Q34.5 34.8 37.5 33" stroke="#7d7d7d" stroke-width="1.5" fill="none"/><path d="M29 38.2 Q35 36.4 45 38.4 Q36 41.2 29 38.2Z" fill="#4a4a4a"/><circle cx="54.5" cy="49.5" r="1.6" fill="#d8d8d8"/></g></g></svg>
<span id="t185" class="t" style="top:1567.0px;font-size:26px;left:2896.0px;color:#e0e0e0;letter-spacing:0.087px;">Hack for a custom<span style="letter-spacing:1px">…</span></span>
<span id="t186" class="t" style="top:1567.0px;font-size:26px;right:212.5px;color:#e0e0e0;letter-spacing:0.1px;">18450e9</span>
<div style="left:2826px;top:1628px;width:416px;height:2px;background:#303030;"></div>
</div></div>
</body>
</html>
